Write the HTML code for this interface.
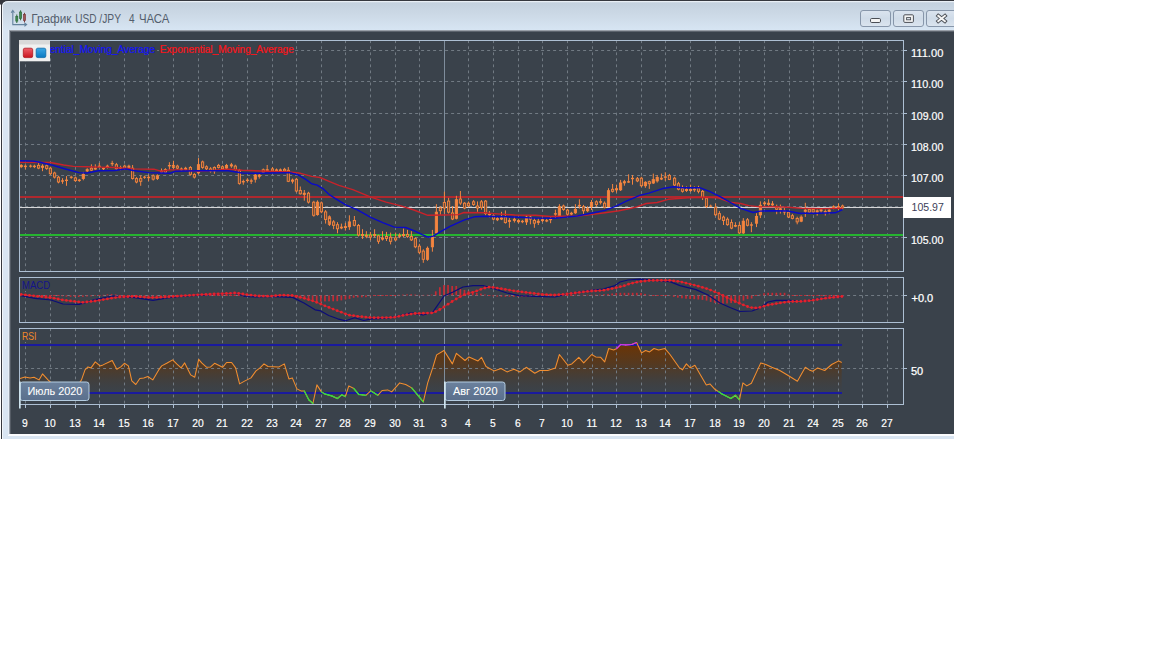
<!DOCTYPE html>
<html lang="ru"><head><meta charset="utf-8"><title>График USD /JPY 4 ЧАСА</title>
<style>html,body{margin:0;padding:0;background:#fff;width:1152px;height:648px;overflow:hidden}svg text{white-space:pre}</style>
</head><body>
<svg width="1152" height="648" viewBox="0 0 1152 648" style="display:block">
<defs>
<linearGradient id="tb" gradientUnits="userSpaceOnUse" x1="0" y1="2" x2="0" y2="30"><stop offset="0" stop-color="#c4d1de"/><stop offset="0.5" stop-color="#cddae7"/><stop offset="1" stop-color="#d7e5f3"/></linearGradient>
<linearGradient id="btn" x1="0" y1="0" x2="0" y2="1"><stop offset="0" stop-color="#dbe4ef"/><stop offset="0.5" stop-color="#cfdbe8"/><stop offset="1" stop-color="#dce5ef"/></linearGradient>
<linearGradient id="rsif" gradientUnits="userSpaceOnUse" x1="0" y1="343" x2="0" y2="393"><stop offset="0" stop-color="#6e3403" stop-opacity="1"/><stop offset="0.4" stop-color="#643408" stop-opacity="0.66"/><stop offset="0.75" stop-color="#5a3510" stop-opacity="0.22"/><stop offset="1" stop-color="#5a3a1a" stop-opacity="0"/></linearGradient>
<linearGradient id="lbl" x1="0" y1="0" x2="0" y2="1"><stop offset="0" stop-color="#6b819d"/><stop offset="1" stop-color="#5a6f8c"/></linearGradient>
<linearGradient id="rsq" x1="0" y1="0" x2="0" y2="1"><stop offset="0" stop-color="#f0606a"/><stop offset="1" stop-color="#c8141e"/></linearGradient>
<linearGradient id="bsq" x1="0" y1="0" x2="0" y2="1"><stop offset="0" stop-color="#3aa8e6"/><stop offset="1" stop-color="#0a78c0"/></linearGradient>
<clipPath id="cw"><rect x="0" y="0" width="954" height="439"/></clipPath>
<clipPath id="cmain"><rect x="20" y="41" width="883" height="230"/></clipPath>
<clipPath id="cmacd"><rect x="20" y="278" width="883" height="44"/></clipPath>
<clipPath id="crsi"><rect x="20" y="329" width="883" height="75"/></clipPath>
</defs>
<rect width="1152" height="648" fill="#ffffff"/>
<g clip-path="url(#cw)">
<path d="M0 0 H8 V1.5 L2 6 L0 4 Z" fill="#36383e"/>
<path d="M2 439 V6 Q2 1 8 1 H954 V439 Z" fill="url(#tb)"/>
<rect x="2" y="30" width="952" height="409" fill="#d9e5f2"/>
<path d="M1.5 439 V6 Q1.5 0.5 8 0.5 H954" fill="none" stroke="#36383e" stroke-width="1"/>
<path d="M2.5 439 V7 Q2.5 1.7 8 1.7 H954" fill="none" stroke="#f2f6fa" stroke-width="1"/>
<rect x="9" y="30" width="946" height="404" fill="#3a424b"/>
<rect x="9" y="30" width="946" height="1" fill="#9aa0a8"/><rect x="9" y="31" width="946" height="1" fill="#5d646d"/>
<rect x="9" y="30" width="1" height="404" fill="#98a0aa"/><rect x="10" y="31" width="1" height="403" fill="#555c65"/>
<rect x="8" y="434" width="947" height="2" fill="#fbfcfe"/>
<rect x="8" y="30" width="1" height="405" fill="#e6eef7"/>
<g fill="none" stroke="#64839e" stroke-width="1.1"><path d="M12.8 11 V24.6 H26"/><path d="M11.2 12.8 L12.8 10.4 L14.4 12.8"/><path d="M24.4 23 L26.6 24.6 L24.4 26.2"/></g>
<g stroke-width="1"><path d="M16.8 14.5 V23" stroke="#2f6b3c"/><rect x="15.8" y="16.5" width="2" height="4.6" fill="#3f8a50" stroke="#2f6b3c" stroke-width="0.7"/><path d="M20.6 10.3 V20.3" stroke="#2f6b3c"/><rect x="19.6" y="12" width="2" height="6.4" fill="#3f8a50" stroke="#2f6b3c" stroke-width="0.7"/><path d="M24.5 12.8 V22.4" stroke="#7a3c3c"/><rect x="23.5" y="14.6" width="2" height="6" fill="#a05555" stroke="#7a3c3c" stroke-width="0.7"/></g>
<text y="23.2" font-family="'Liberation Sans', sans-serif" font-size="12.6" fill="#545e6d" xml:space="preserve"><tspan x="31.3" textLength="40.2" lengthAdjust="spacingAndGlyphs">График</tspan> <tspan x="75.3" textLength="21.2" lengthAdjust="spacingAndGlyphs">USD</tspan> <tspan x="99.3" textLength="21.5" lengthAdjust="spacingAndGlyphs">/JPY</tspan>  <tspan x="128.9" textLength="5.6" lengthAdjust="spacingAndGlyphs">4</tspan> <tspan x="138.9" textLength="30.6" lengthAdjust="spacingAndGlyphs">ЧАСА</tspan></text>
<rect x="860.5" y="10.5" width="30" height="16" rx="2.5" fill="url(#btn)" stroke="#8796aa" stroke-width="1"/>
<rect x="893.5" y="10.5" width="30" height="16" rx="2.5" fill="url(#btn)" stroke="#8796aa" stroke-width="1"/>
<rect x="926.5" y="10.5" width="32" height="16" rx="2.5" fill="url(#btn)" stroke="#8796aa" stroke-width="1"/>
<rect x="870.5" y="18.5" width="10" height="4" rx="1.2" fill="#f4f4f4" stroke="#4a4e55" stroke-width="1"/>
<rect x="903.8" y="14.8" width="9.6" height="7.6" rx="1" fill="#f4f4f4" stroke="#4a4e55" stroke-width="1"/><rect x="906.6" y="17.6" width="4" height="2.2" fill="#dfe6ee" stroke="#4a4e55" stroke-width="0.9"/>
<path d="M938.3 15.8 L944.9 21.2 M944.9 15.8 L938.3 21.2" stroke="#4a4e55" stroke-width="3.8" stroke-linecap="square"/><path d="M938.3 15.8 L944.9 21.2 M944.9 15.8 L938.3 21.2" stroke="#f4f4f4" stroke-width="2" stroke-linecap="square"/>
<line x1="25.50" y1="40.3" x2="25.50" y2="271" stroke="#717a83" stroke-width="1" stroke-dasharray="2.8 3.23"/>
<line x1="50.50" y1="40.3" x2="50.50" y2="271" stroke="#717a83" stroke-width="1" stroke-dasharray="2.8 3.23"/>
<line x1="75.50" y1="40.3" x2="75.50" y2="271" stroke="#717a83" stroke-width="1" stroke-dasharray="2.8 3.23"/>
<line x1="99.50" y1="40.3" x2="99.50" y2="271" stroke="#717a83" stroke-width="1" stroke-dasharray="2.8 3.23"/>
<line x1="124.50" y1="40.3" x2="124.50" y2="271" stroke="#717a83" stroke-width="1" stroke-dasharray="2.8 3.23"/>
<line x1="148.50" y1="40.3" x2="148.50" y2="271" stroke="#717a83" stroke-width="1" stroke-dasharray="2.8 3.23"/>
<line x1="173.50" y1="40.3" x2="173.50" y2="271" stroke="#717a83" stroke-width="1" stroke-dasharray="2.8 3.23"/>
<line x1="198.50" y1="40.3" x2="198.50" y2="271" stroke="#717a83" stroke-width="1" stroke-dasharray="2.8 3.23"/>
<line x1="222.50" y1="40.3" x2="222.50" y2="271" stroke="#717a83" stroke-width="1" stroke-dasharray="2.8 3.23"/>
<line x1="247.50" y1="40.3" x2="247.50" y2="271" stroke="#717a83" stroke-width="1" stroke-dasharray="2.8 3.23"/>
<line x1="272.50" y1="40.3" x2="272.50" y2="271" stroke="#717a83" stroke-width="1" stroke-dasharray="2.8 3.23"/>
<line x1="296.50" y1="40.3" x2="296.50" y2="271" stroke="#717a83" stroke-width="1" stroke-dasharray="2.8 3.23"/>
<line x1="321.50" y1="40.3" x2="321.50" y2="271" stroke="#717a83" stroke-width="1" stroke-dasharray="2.8 3.23"/>
<line x1="345.50" y1="40.3" x2="345.50" y2="271" stroke="#717a83" stroke-width="1" stroke-dasharray="2.8 3.23"/>
<line x1="370.50" y1="40.3" x2="370.50" y2="271" stroke="#717a83" stroke-width="1" stroke-dasharray="2.8 3.23"/>
<line x1="395.50" y1="40.3" x2="395.50" y2="271" stroke="#717a83" stroke-width="1" stroke-dasharray="2.8 3.23"/>
<line x1="419.50" y1="40.3" x2="419.50" y2="271" stroke="#717a83" stroke-width="1" stroke-dasharray="2.8 3.23"/>
<line x1="468.50" y1="40.3" x2="468.50" y2="271" stroke="#717a83" stroke-width="1" stroke-dasharray="2.8 3.23"/>
<line x1="493.50" y1="40.3" x2="493.50" y2="271" stroke="#717a83" stroke-width="1" stroke-dasharray="2.8 3.23"/>
<line x1="518.50" y1="40.3" x2="518.50" y2="271" stroke="#717a83" stroke-width="1" stroke-dasharray="2.8 3.23"/>
<line x1="542.50" y1="40.3" x2="542.50" y2="271" stroke="#717a83" stroke-width="1" stroke-dasharray="2.8 3.23"/>
<line x1="567.50" y1="40.3" x2="567.50" y2="271" stroke="#717a83" stroke-width="1" stroke-dasharray="2.8 3.23"/>
<line x1="592.50" y1="40.3" x2="592.50" y2="271" stroke="#717a83" stroke-width="1" stroke-dasharray="2.8 3.23"/>
<line x1="616.50" y1="40.3" x2="616.50" y2="271" stroke="#717a83" stroke-width="1" stroke-dasharray="2.8 3.23"/>
<line x1="641.50" y1="40.3" x2="641.50" y2="271" stroke="#717a83" stroke-width="1" stroke-dasharray="2.8 3.23"/>
<line x1="665.50" y1="40.3" x2="665.50" y2="271" stroke="#717a83" stroke-width="1" stroke-dasharray="2.8 3.23"/>
<line x1="690.50" y1="40.3" x2="690.50" y2="271" stroke="#717a83" stroke-width="1" stroke-dasharray="2.8 3.23"/>
<line x1="715.50" y1="40.3" x2="715.50" y2="271" stroke="#717a83" stroke-width="1" stroke-dasharray="2.8 3.23"/>
<line x1="739.50" y1="40.3" x2="739.50" y2="271" stroke="#717a83" stroke-width="1" stroke-dasharray="2.8 3.23"/>
<line x1="764.50" y1="40.3" x2="764.50" y2="271" stroke="#717a83" stroke-width="1" stroke-dasharray="2.8 3.23"/>
<line x1="789.50" y1="40.3" x2="789.50" y2="271" stroke="#717a83" stroke-width="1" stroke-dasharray="2.8 3.23"/>
<line x1="813.50" y1="40.3" x2="813.50" y2="271" stroke="#717a83" stroke-width="1" stroke-dasharray="2.8 3.23"/>
<line x1="838.50" y1="40.3" x2="838.50" y2="271" stroke="#717a83" stroke-width="1" stroke-dasharray="2.8 3.23"/>
<line x1="862.50" y1="40.3" x2="862.50" y2="271" stroke="#717a83" stroke-width="1" stroke-dasharray="2.8 3.23"/>
<line x1="887.50" y1="40.3" x2="887.50" y2="271" stroke="#717a83" stroke-width="1" stroke-dasharray="2.8 3.23"/>
<line x1="20" y1="50.50" x2="903" y2="50.50" stroke="#717a83" stroke-width="1" stroke-dasharray="3 3" stroke-dashoffset="0.9"/>
<line x1="903" y1="50.50" x2="907" y2="50.50" stroke="#adbfd3" stroke-width="1"/>
<line x1="20" y1="81.50" x2="903" y2="81.50" stroke="#717a83" stroke-width="1" stroke-dasharray="3 3" stroke-dashoffset="0.9"/>
<line x1="903" y1="81.50" x2="907" y2="81.50" stroke="#adbfd3" stroke-width="1"/>
<line x1="20" y1="113.50" x2="903" y2="113.50" stroke="#717a83" stroke-width="1" stroke-dasharray="3 3" stroke-dashoffset="0.9"/>
<line x1="903" y1="113.50" x2="907" y2="113.50" stroke="#adbfd3" stroke-width="1"/>
<line x1="20" y1="144.50" x2="903" y2="144.50" stroke="#717a83" stroke-width="1" stroke-dasharray="3 3" stroke-dashoffset="0.9"/>
<line x1="903" y1="144.50" x2="907" y2="144.50" stroke="#adbfd3" stroke-width="1"/>
<line x1="20" y1="175.50" x2="903" y2="175.50" stroke="#717a83" stroke-width="1" stroke-dasharray="3 3" stroke-dashoffset="0.9"/>
<line x1="903" y1="175.50" x2="907" y2="175.50" stroke="#adbfd3" stroke-width="1"/>
<line x1="20" y1="206.50" x2="903" y2="206.50" stroke="#717a83" stroke-width="1" stroke-dasharray="3 3" stroke-dashoffset="0.9"/>
<line x1="903" y1="206.50" x2="907" y2="206.50" stroke="#adbfd3" stroke-width="1"/>
<line x1="20" y1="237.50" x2="903" y2="237.50" stroke="#717a83" stroke-width="1" stroke-dasharray="3 3" stroke-dashoffset="0.9"/>
<line x1="903" y1="237.50" x2="907" y2="237.50" stroke="#adbfd3" stroke-width="1"/>
<line x1="25.50" y1="277.3" x2="25.50" y2="322" stroke="#717a83" stroke-width="1" stroke-dasharray="2.8 3.23"/>
<line x1="50.50" y1="277.3" x2="50.50" y2="322" stroke="#717a83" stroke-width="1" stroke-dasharray="2.8 3.23"/>
<line x1="75.50" y1="277.3" x2="75.50" y2="322" stroke="#717a83" stroke-width="1" stroke-dasharray="2.8 3.23"/>
<line x1="99.50" y1="277.3" x2="99.50" y2="322" stroke="#717a83" stroke-width="1" stroke-dasharray="2.8 3.23"/>
<line x1="124.50" y1="277.3" x2="124.50" y2="322" stroke="#717a83" stroke-width="1" stroke-dasharray="2.8 3.23"/>
<line x1="148.50" y1="277.3" x2="148.50" y2="322" stroke="#717a83" stroke-width="1" stroke-dasharray="2.8 3.23"/>
<line x1="173.50" y1="277.3" x2="173.50" y2="322" stroke="#717a83" stroke-width="1" stroke-dasharray="2.8 3.23"/>
<line x1="198.50" y1="277.3" x2="198.50" y2="322" stroke="#717a83" stroke-width="1" stroke-dasharray="2.8 3.23"/>
<line x1="222.50" y1="277.3" x2="222.50" y2="322" stroke="#717a83" stroke-width="1" stroke-dasharray="2.8 3.23"/>
<line x1="247.50" y1="277.3" x2="247.50" y2="322" stroke="#717a83" stroke-width="1" stroke-dasharray="2.8 3.23"/>
<line x1="272.50" y1="277.3" x2="272.50" y2="322" stroke="#717a83" stroke-width="1" stroke-dasharray="2.8 3.23"/>
<line x1="296.50" y1="277.3" x2="296.50" y2="322" stroke="#717a83" stroke-width="1" stroke-dasharray="2.8 3.23"/>
<line x1="321.50" y1="277.3" x2="321.50" y2="322" stroke="#717a83" stroke-width="1" stroke-dasharray="2.8 3.23"/>
<line x1="345.50" y1="277.3" x2="345.50" y2="322" stroke="#717a83" stroke-width="1" stroke-dasharray="2.8 3.23"/>
<line x1="370.50" y1="277.3" x2="370.50" y2="322" stroke="#717a83" stroke-width="1" stroke-dasharray="2.8 3.23"/>
<line x1="395.50" y1="277.3" x2="395.50" y2="322" stroke="#717a83" stroke-width="1" stroke-dasharray="2.8 3.23"/>
<line x1="419.50" y1="277.3" x2="419.50" y2="322" stroke="#717a83" stroke-width="1" stroke-dasharray="2.8 3.23"/>
<line x1="468.50" y1="277.3" x2="468.50" y2="322" stroke="#717a83" stroke-width="1" stroke-dasharray="2.8 3.23"/>
<line x1="493.50" y1="277.3" x2="493.50" y2="322" stroke="#717a83" stroke-width="1" stroke-dasharray="2.8 3.23"/>
<line x1="518.50" y1="277.3" x2="518.50" y2="322" stroke="#717a83" stroke-width="1" stroke-dasharray="2.8 3.23"/>
<line x1="542.50" y1="277.3" x2="542.50" y2="322" stroke="#717a83" stroke-width="1" stroke-dasharray="2.8 3.23"/>
<line x1="567.50" y1="277.3" x2="567.50" y2="322" stroke="#717a83" stroke-width="1" stroke-dasharray="2.8 3.23"/>
<line x1="592.50" y1="277.3" x2="592.50" y2="322" stroke="#717a83" stroke-width="1" stroke-dasharray="2.8 3.23"/>
<line x1="616.50" y1="277.3" x2="616.50" y2="322" stroke="#717a83" stroke-width="1" stroke-dasharray="2.8 3.23"/>
<line x1="641.50" y1="277.3" x2="641.50" y2="322" stroke="#717a83" stroke-width="1" stroke-dasharray="2.8 3.23"/>
<line x1="665.50" y1="277.3" x2="665.50" y2="322" stroke="#717a83" stroke-width="1" stroke-dasharray="2.8 3.23"/>
<line x1="690.50" y1="277.3" x2="690.50" y2="322" stroke="#717a83" stroke-width="1" stroke-dasharray="2.8 3.23"/>
<line x1="715.50" y1="277.3" x2="715.50" y2="322" stroke="#717a83" stroke-width="1" stroke-dasharray="2.8 3.23"/>
<line x1="739.50" y1="277.3" x2="739.50" y2="322" stroke="#717a83" stroke-width="1" stroke-dasharray="2.8 3.23"/>
<line x1="764.50" y1="277.3" x2="764.50" y2="322" stroke="#717a83" stroke-width="1" stroke-dasharray="2.8 3.23"/>
<line x1="789.50" y1="277.3" x2="789.50" y2="322" stroke="#717a83" stroke-width="1" stroke-dasharray="2.8 3.23"/>
<line x1="813.50" y1="277.3" x2="813.50" y2="322" stroke="#717a83" stroke-width="1" stroke-dasharray="2.8 3.23"/>
<line x1="838.50" y1="277.3" x2="838.50" y2="322" stroke="#717a83" stroke-width="1" stroke-dasharray="2.8 3.23"/>
<line x1="862.50" y1="277.3" x2="862.50" y2="322" stroke="#717a83" stroke-width="1" stroke-dasharray="2.8 3.23"/>
<line x1="887.50" y1="277.3" x2="887.50" y2="322" stroke="#717a83" stroke-width="1" stroke-dasharray="2.8 3.23"/>
<line x1="20" y1="295.50" x2="903" y2="295.50" stroke="#717a83" stroke-width="1" stroke-dasharray="3 3" stroke-dashoffset="0.9"/>
<line x1="903" y1="295.50" x2="907" y2="295.50" stroke="#adbfd3" stroke-width="1"/>
<path d="M20.0 378.5 L25.0 376.9 L30.0 377.9 L34.0 377.3 L39.0 379.9 L42.5 373.9 L48.0 379.9 L52.0 383.5 L70.0 384.5 L79.0 383.5 L81.5 379.9 L85.0 369.9 L88.0 366.9 L91.0 367.9 L95.3 361.9 L100.0 365.9 L103.0 364.9 L112.2 360.5 L116.8 369.3 L120.8 366.9 L124.4 363.3 L128.4 365.9 L131.8 380.9 L135.8 384.5 L139.8 378.5 L143.8 377.9 L147.8 376.5 L152.8 379.9 L158.7 369.9 L161.7 365.9 L166.7 363.3 L172.7 359.9 L176.7 363.9 L181.1 367.9 L184.7 362.9 L190.7 374.9 L194.7 377.3 L198.7 359.3 L201.7 362.9 L206.7 367.3 L210.6 366.9 L214.6 363.3 L222.6 367.3 L226.6 362.5 L231.6 362.5 L235.6 367.9 L239.6 383.9 L245.0 380.9 L251.0 377.9 L256.0 370.9 L260.0 367.9 L264.0 363.9 L268.0 366.5 L279.0 366.9 L284.3 363.9 L288.9 378.9 L292.3 377.9 L296.9 388.9 L300.9 390.9 L304.3 390.9 L308.9 399.9 L312.9 403.5 L316.9 384.9 L321.4 391.9 L324.8 393.9 L331.8 395.9 L337.4 398.5 L341.8 394.9 L345.4 396.5 L348.8 385.9 L353.8 388.5 L358.8 394.5 L365.8 395.3 L370.8 390.9 L377.8 395.3 L382.1 390.5 L387.7 389.9 L391.7 391.9 L399.7 382.9 L405.7 384.5 L411.7 387.9 L416.7 393.9 L423.3 401.9 L427.7 382.9 L432.7 367.9 L436.6 354.9 L444.0 350.5 L452.4 363.9 L456.4 353.3 L465.0 360.5 L469.0 356.9 L478.0 360.9 L481.5 357.3 L486.0 366.5 L494.0 370.9 L501.0 368.5 L507.0 371.9 L514.0 369.3 L520.0 371.9 L526.2 367.3 L534.8 373.3 L539.8 370.5 L547.8 370.5 L555.4 367.9 L559.4 354.5 L567.8 365.3 L571.8 363.9 L578.8 357.3 L583.7 362.9 L591.7 354.5 L595.7 356.9 L600.7 357.3 L604.7 361.9 L608.7 348.5 L613.7 349.9 L616.7 348.5 L620.7 344.5 L625.7 344.9 L631.7 344.5 L636.6 342.5 L641.6 352.9 L645.6 350.5 L649.6 351.9 L654.0 348.5 L658.6 349.9 L665.0 348.6 L670.0 354.5 L679.0 367.3 L682.4 369.9 L686.4 363.9 L690.3 367.9 L694.9 365.3 L699.9 373.9 L706.3 384.9 L709.9 383.9 L714.9 389.3 L721.9 393.9 L730.9 398.5 L735.5 395.3 L739.5 399.9 L742.9 382.9 L746.8 385.9 L751.4 383.3 L760.8 362.9 L765.8 364.5 L771.8 367.3 L779.8 370.5 L787.8 375.3 L797.4 381.3 L805.3 367.3 L809.3 369.9 L812.7 371.3 L817.7 367.9 L824.7 370.5 L831.7 364.5 L838.7 360.9 L841.7 362.5 L841.7 398 L20.0 398 Z" fill="url(#rsif)" clip-path="url(#crsi)"/>
<line x1="25.50" y1="328.3" x2="25.50" y2="404" stroke="#717a83" stroke-width="1" stroke-dasharray="2.8 3.23"/>
<line x1="50.50" y1="328.3" x2="50.50" y2="404" stroke="#717a83" stroke-width="1" stroke-dasharray="2.8 3.23"/>
<line x1="75.50" y1="328.3" x2="75.50" y2="404" stroke="#717a83" stroke-width="1" stroke-dasharray="2.8 3.23"/>
<line x1="99.50" y1="328.3" x2="99.50" y2="404" stroke="#717a83" stroke-width="1" stroke-dasharray="2.8 3.23"/>
<line x1="124.50" y1="328.3" x2="124.50" y2="404" stroke="#717a83" stroke-width="1" stroke-dasharray="2.8 3.23"/>
<line x1="148.50" y1="328.3" x2="148.50" y2="404" stroke="#717a83" stroke-width="1" stroke-dasharray="2.8 3.23"/>
<line x1="173.50" y1="328.3" x2="173.50" y2="404" stroke="#717a83" stroke-width="1" stroke-dasharray="2.8 3.23"/>
<line x1="198.50" y1="328.3" x2="198.50" y2="404" stroke="#717a83" stroke-width="1" stroke-dasharray="2.8 3.23"/>
<line x1="222.50" y1="328.3" x2="222.50" y2="404" stroke="#717a83" stroke-width="1" stroke-dasharray="2.8 3.23"/>
<line x1="247.50" y1="328.3" x2="247.50" y2="404" stroke="#717a83" stroke-width="1" stroke-dasharray="2.8 3.23"/>
<line x1="272.50" y1="328.3" x2="272.50" y2="404" stroke="#717a83" stroke-width="1" stroke-dasharray="2.8 3.23"/>
<line x1="296.50" y1="328.3" x2="296.50" y2="404" stroke="#717a83" stroke-width="1" stroke-dasharray="2.8 3.23"/>
<line x1="321.50" y1="328.3" x2="321.50" y2="404" stroke="#717a83" stroke-width="1" stroke-dasharray="2.8 3.23"/>
<line x1="345.50" y1="328.3" x2="345.50" y2="404" stroke="#717a83" stroke-width="1" stroke-dasharray="2.8 3.23"/>
<line x1="370.50" y1="328.3" x2="370.50" y2="404" stroke="#717a83" stroke-width="1" stroke-dasharray="2.8 3.23"/>
<line x1="395.50" y1="328.3" x2="395.50" y2="404" stroke="#717a83" stroke-width="1" stroke-dasharray="2.8 3.23"/>
<line x1="419.50" y1="328.3" x2="419.50" y2="404" stroke="#717a83" stroke-width="1" stroke-dasharray="2.8 3.23"/>
<line x1="468.50" y1="328.3" x2="468.50" y2="404" stroke="#717a83" stroke-width="1" stroke-dasharray="2.8 3.23"/>
<line x1="493.50" y1="328.3" x2="493.50" y2="404" stroke="#717a83" stroke-width="1" stroke-dasharray="2.8 3.23"/>
<line x1="518.50" y1="328.3" x2="518.50" y2="404" stroke="#717a83" stroke-width="1" stroke-dasharray="2.8 3.23"/>
<line x1="542.50" y1="328.3" x2="542.50" y2="404" stroke="#717a83" stroke-width="1" stroke-dasharray="2.8 3.23"/>
<line x1="567.50" y1="328.3" x2="567.50" y2="404" stroke="#717a83" stroke-width="1" stroke-dasharray="2.8 3.23"/>
<line x1="592.50" y1="328.3" x2="592.50" y2="404" stroke="#717a83" stroke-width="1" stroke-dasharray="2.8 3.23"/>
<line x1="616.50" y1="328.3" x2="616.50" y2="404" stroke="#717a83" stroke-width="1" stroke-dasharray="2.8 3.23"/>
<line x1="641.50" y1="328.3" x2="641.50" y2="404" stroke="#717a83" stroke-width="1" stroke-dasharray="2.8 3.23"/>
<line x1="665.50" y1="328.3" x2="665.50" y2="404" stroke="#717a83" stroke-width="1" stroke-dasharray="2.8 3.23"/>
<line x1="690.50" y1="328.3" x2="690.50" y2="404" stroke="#717a83" stroke-width="1" stroke-dasharray="2.8 3.23"/>
<line x1="715.50" y1="328.3" x2="715.50" y2="404" stroke="#717a83" stroke-width="1" stroke-dasharray="2.8 3.23"/>
<line x1="739.50" y1="328.3" x2="739.50" y2="404" stroke="#717a83" stroke-width="1" stroke-dasharray="2.8 3.23"/>
<line x1="764.50" y1="328.3" x2="764.50" y2="404" stroke="#717a83" stroke-width="1" stroke-dasharray="2.8 3.23"/>
<line x1="789.50" y1="328.3" x2="789.50" y2="404" stroke="#717a83" stroke-width="1" stroke-dasharray="2.8 3.23"/>
<line x1="813.50" y1="328.3" x2="813.50" y2="404" stroke="#717a83" stroke-width="1" stroke-dasharray="2.8 3.23"/>
<line x1="838.50" y1="328.3" x2="838.50" y2="404" stroke="#717a83" stroke-width="1" stroke-dasharray="2.8 3.23"/>
<line x1="862.50" y1="328.3" x2="862.50" y2="404" stroke="#717a83" stroke-width="1" stroke-dasharray="2.8 3.23"/>
<line x1="887.50" y1="328.3" x2="887.50" y2="404" stroke="#717a83" stroke-width="1" stroke-dasharray="2.8 3.23"/>
<line x1="20" y1="368.50" x2="903" y2="368.50" stroke="#717a83" stroke-width="1" stroke-dasharray="3 3" stroke-dashoffset="0.9"/>
<line x1="903" y1="368.50" x2="907" y2="368.50" stroke="#adbfd3" stroke-width="1"/>
<line x1="444.5" y1="41" x2="444.5" y2="271" stroke="#7f8d9c" stroke-width="1"/>
<line x1="444.5" y1="278" x2="444.5" y2="322" stroke="#7f8d9c" stroke-width="1"/>
<line x1="444.5" y1="329" x2="444.5" y2="404" stroke="#7f8d9c" stroke-width="1"/>
<g clip-path="url(#cmain)">
<rect x="20" y="196.1" width="883" height="1.8" fill="#bd262c"/>
<rect x="20" y="234" width="883" height="2" fill="#26b430"/>
<rect x="20" y="207" width="883" height="1" fill="#d6d6d8"/>
<line x1="21.2" y1="164.0" x2="21.2" y2="168.1" stroke="#f4853f" stroke-width="1"/>
<rect x="19.8" y="165.0" width="3" height="2.1" fill="#f4853f"/>
<line x1="25.4" y1="164.3" x2="25.4" y2="169.4" stroke="#f4853f" stroke-width="1"/>
<rect x="23.9" y="165.7" width="3" height="1.4" fill="#f4853f"/>
<line x1="30.6" y1="164.6" x2="30.6" y2="167.6" stroke="#f4853f" stroke-width="1"/>
<rect x="29.1" y="165.6" width="3" height="1.1" fill="#f4853f"/>
<line x1="34.4" y1="164.7" x2="34.4" y2="168.1" stroke="#f4853f" stroke-width="1"/>
<rect x="32.9" y="165.7" width="3" height="1.4" fill="#f4853f"/>
<line x1="38.6" y1="162.9" x2="38.6" y2="169.2" stroke="#f4853f" stroke-width="1"/>
<rect x="37.5" y="165.4" width="2.2" height="2.7" fill="#6a4a38" stroke="#f4853f" stroke-width="0.9"/>
<line x1="42.5" y1="164.3" x2="42.5" y2="171.2" stroke="#f4853f" stroke-width="1"/>
<rect x="41.0" y="165.7" width="3" height="2.1" fill="#f4853f"/>
<line x1="46.7" y1="164.3" x2="46.7" y2="169.9" stroke="#f4853f" stroke-width="1"/>
<rect x="45.6" y="165.7" width="2.2" height="2.8" fill="#6a4a38" stroke="#f4853f" stroke-width="0.9"/>
<line x1="50.4" y1="166.8" x2="50.4" y2="175.0" stroke="#f4853f" stroke-width="1"/>
<rect x="49.3" y="168.2" width="2.2" height="5.5" fill="#6a4a38" stroke="#f4853f" stroke-width="0.9"/>
<line x1="54.6" y1="171.7" x2="54.6" y2="178.5" stroke="#f4853f" stroke-width="1"/>
<rect x="53.5" y="173.0" width="2.2" height="4.1" fill="#6a4a38" stroke="#f4853f" stroke-width="0.9"/>
<line x1="58.5" y1="175.8" x2="58.5" y2="183.3" stroke="#f4853f" stroke-width="1"/>
<rect x="57.4" y="177.2" width="2.2" height="4.8" fill="#6a4a38" stroke="#f4853f" stroke-width="0.9"/>
<line x1="62.5" y1="178.2" x2="62.5" y2="183.8" stroke="#f4853f" stroke-width="1"/>
<rect x="61.0" y="180.3" width="3" height="1.4" fill="#f4853f"/>
<line x1="66.5" y1="176.1" x2="66.5" y2="185.8" stroke="#f4853f" stroke-width="1"/>
<rect x="65.0" y="179.6" width="3" height="1.4" fill="#f4853f"/>
<line x1="71.2" y1="175.7" x2="71.2" y2="178.8" stroke="#f4853f" stroke-width="1"/>
<rect x="69.8" y="176.7" width="3" height="1.1" fill="#f4853f"/>
<line x1="75.4" y1="176.5" x2="75.4" y2="181.9" stroke="#f4853f" stroke-width="1"/>
<rect x="74.3" y="177.9" width="2.2" height="2.7" fill="#6a4a38" stroke="#f4853f" stroke-width="0.9"/>
<line x1="79.3" y1="178.9" x2="79.3" y2="181.9" stroke="#f4853f" stroke-width="1"/>
<rect x="77.8" y="179.6" width="3" height="1.4" fill="#f4853f"/>
<line x1="83.3" y1="171.9" x2="83.3" y2="180.3" stroke="#f4853f" stroke-width="1"/>
<rect x="82.2" y="174.4" width="2.2" height="4.1" fill="#f4853f" stroke="#f4853f" stroke-width="0.9"/>
<line x1="87.2" y1="168.2" x2="87.2" y2="172.2" stroke="#f4853f" stroke-width="1"/>
<rect x="85.7" y="169.2" width="3" height="2.1" fill="#f4853f"/>
<line x1="91.4" y1="164.3" x2="91.4" y2="171.2" stroke="#f4853f" stroke-width="1"/>
<rect x="90.3" y="168.2" width="2.2" height="2.0" fill="#6a4a38" stroke="#f4853f" stroke-width="0.9"/>
<line x1="95.3" y1="164.3" x2="95.3" y2="169.9" stroke="#f4853f" stroke-width="1"/>
<rect x="93.8" y="167.8" width="3" height="1.7" fill="#f4853f"/>
<line x1="99.3" y1="162.9" x2="99.3" y2="168.1" stroke="#f4853f" stroke-width="1"/>
<rect x="97.8" y="165.7" width="3" height="1.4" fill="#f4853f"/>
<line x1="103.5" y1="167.1" x2="103.5" y2="170.8" stroke="#f4853f" stroke-width="1"/>
<rect x="102.0" y="167.8" width="3" height="1.4" fill="#f4853f"/>
<line x1="107.4" y1="164.7" x2="107.4" y2="168.5" stroke="#f4853f" stroke-width="1"/>
<rect x="105.9" y="165.7" width="3" height="1.4" fill="#f4853f"/>
<line x1="112.2" y1="160.8" x2="112.2" y2="166.0" stroke="#f4853f" stroke-width="1"/>
<rect x="110.7" y="162.9" width="3" height="1.4" fill="#f4853f"/>
<line x1="116.4" y1="162.9" x2="116.4" y2="169.9" stroke="#f4853f" stroke-width="1"/>
<rect x="115.3" y="164.7" width="2.2" height="4.1" fill="#6a4a38" stroke="#f4853f" stroke-width="0.9"/>
<line x1="120.6" y1="165.7" x2="120.6" y2="170.3" stroke="#f4853f" stroke-width="1"/>
<rect x="119.1" y="167.1" width="3" height="1.4" fill="#f4853f"/>
<line x1="124.7" y1="164.7" x2="124.7" y2="169.4" stroke="#f4853f" stroke-width="1"/>
<rect x="123.6" y="166.1" width="2.2" height="2.0" fill="#6a4a38" stroke="#f4853f" stroke-width="0.9"/>
<line x1="128.9" y1="164.7" x2="128.9" y2="168.8" stroke="#f4853f" stroke-width="1"/>
<rect x="127.4" y="165.7" width="3" height="2.1" fill="#f4853f"/>
<line x1="132.6" y1="165.0" x2="132.6" y2="179.6" stroke="#f4853f" stroke-width="1"/>
<rect x="131.5" y="168.2" width="2.2" height="10.3" fill="#6a4a38" stroke="#f4853f" stroke-width="0.9"/>
<line x1="136.5" y1="177.2" x2="136.5" y2="183.3" stroke="#f4853f" stroke-width="1"/>
<rect x="135.4" y="178.6" width="2.2" height="3.4" fill="#6a4a38" stroke="#f4853f" stroke-width="0.9"/>
<line x1="140.7" y1="175.4" x2="140.7" y2="185.8" stroke="#f4853f" stroke-width="1"/>
<rect x="139.6" y="178.6" width="2.2" height="2.7" fill="#6a4a38" stroke="#f4853f" stroke-width="0.9"/>
<line x1="144.6" y1="175.7" x2="144.6" y2="178.8" stroke="#f4853f" stroke-width="1"/>
<rect x="143.1" y="176.7" width="3" height="1.1" fill="#f4853f"/>
<line x1="148.6" y1="174.7" x2="148.6" y2="181.2" stroke="#f4853f" stroke-width="1"/>
<rect x="147.1" y="176.8" width="3" height="1.4" fill="#f4853f"/>
<line x1="153.2" y1="174.4" x2="153.2" y2="180.6" stroke="#f4853f" stroke-width="1"/>
<rect x="152.1" y="175.8" width="2.2" height="3.4" fill="#6a4a38" stroke="#f4853f" stroke-width="0.9"/>
<line x1="157.4" y1="174.4" x2="157.4" y2="180.0" stroke="#f4853f" stroke-width="1"/>
<rect x="156.3" y="175.8" width="2.2" height="2.7" fill="#f4853f" stroke="#f4853f" stroke-width="0.9"/>
<line x1="161.5" y1="168.5" x2="161.5" y2="173.3" stroke="#f4853f" stroke-width="1"/>
<rect x="160.0" y="170.6" width="3" height="2.1" fill="#f4853f"/>
<line x1="165.4" y1="168.2" x2="165.4" y2="173.6" stroke="#f4853f" stroke-width="1"/>
<rect x="164.3" y="169.6" width="2.2" height="2.7" fill="#6a4a38" stroke="#f4853f" stroke-width="0.9"/>
<line x1="169.4" y1="162.2" x2="169.4" y2="169.9" stroke="#f4853f" stroke-width="1"/>
<rect x="167.9" y="165.0" width="3" height="1.4" fill="#f4853f"/>
<line x1="173.3" y1="162.9" x2="173.3" y2="168.1" stroke="#f4853f" stroke-width="1"/>
<rect x="171.8" y="165.0" width="3" height="1.4" fill="#f4853f"/>
<line x1="173.5" y1="160.8" x2="173.5" y2="168.8" stroke="#f4853f" stroke-width="1"/>
<rect x="172.0" y="166.4" width="3" height="1.4" fill="#f4853f"/>
<line x1="177.4" y1="164.7" x2="177.4" y2="169.4" stroke="#f4853f" stroke-width="1"/>
<rect x="176.3" y="166.1" width="2.2" height="2.0" fill="#6a4a38" stroke="#f4853f" stroke-width="0.9"/>
<line x1="181.4" y1="167.5" x2="181.4" y2="171.2" stroke="#f4853f" stroke-width="1"/>
<rect x="179.9" y="168.5" width="3" height="1.8" fill="#f4853f"/>
<line x1="185.6" y1="166.8" x2="185.6" y2="170.8" stroke="#f4853f" stroke-width="1"/>
<rect x="184.1" y="167.8" width="3" height="2.1" fill="#f4853f"/>
<line x1="190.4" y1="166.1" x2="190.4" y2="175.7" stroke="#f4853f" stroke-width="1"/>
<rect x="189.3" y="167.5" width="2.2" height="6.8" fill="#6a4a38" stroke="#f4853f" stroke-width="0.9"/>
<line x1="194.4" y1="173.1" x2="194.4" y2="178.5" stroke="#f4853f" stroke-width="1"/>
<rect x="193.3" y="174.4" width="2.2" height="2.7" fill="#6a4a38" stroke="#f4853f" stroke-width="0.9"/>
<line x1="198.5" y1="158.1" x2="198.5" y2="174.3" stroke="#f4853f" stroke-width="1"/>
<rect x="197.4" y="164.7" width="2.2" height="8.2" fill="#f4853f" stroke="#f4853f" stroke-width="0.9"/>
<line x1="202.6" y1="160.6" x2="202.6" y2="168.8" stroke="#f4853f" stroke-width="1"/>
<rect x="201.5" y="161.9" width="2.2" height="5.5" fill="#6a4a38" stroke="#f4853f" stroke-width="0.9"/>
<line x1="206.5" y1="165.4" x2="206.5" y2="170.1" stroke="#f4853f" stroke-width="1"/>
<rect x="205.4" y="166.8" width="2.2" height="2.0" fill="#6a4a38" stroke="#f4853f" stroke-width="0.9"/>
<line x1="210.6" y1="167.1" x2="210.6" y2="172.6" stroke="#f4853f" stroke-width="1"/>
<rect x="209.5" y="168.9" width="2.2" height="2.0" fill="#6a4a38" stroke="#f4853f" stroke-width="0.9"/>
<line x1="214.4" y1="166.4" x2="214.4" y2="173.8" stroke="#f4853f" stroke-width="1"/>
<rect x="213.3" y="167.5" width="2.2" height="3.4" fill="#6a4a38" stroke="#f4853f" stroke-width="0.9"/>
<line x1="218.6" y1="163.9" x2="218.6" y2="168.5" stroke="#f4853f" stroke-width="1"/>
<rect x="217.5" y="165.4" width="2.2" height="2.0" fill="#6a4a38" stroke="#f4853f" stroke-width="0.9"/>
<line x1="222.5" y1="165.4" x2="222.5" y2="170.1" stroke="#f4853f" stroke-width="1"/>
<rect x="221.4" y="166.8" width="2.2" height="2.0" fill="#6a4a38" stroke="#f4853f" stroke-width="0.9"/>
<line x1="226.5" y1="163.9" x2="226.5" y2="169.2" stroke="#f4853f" stroke-width="1"/>
<rect x="225.4" y="165.4" width="2.2" height="2.7" fill="#f4853f" stroke="#f4853f" stroke-width="0.9"/>
<line x1="231.4" y1="162.9" x2="231.4" y2="167.8" stroke="#f4853f" stroke-width="1"/>
<rect x="229.9" y="164.3" width="3" height="2.1" fill="#f4853f"/>
<line x1="235.3" y1="164.7" x2="235.3" y2="170.8" stroke="#f4853f" stroke-width="1"/>
<rect x="234.2" y="166.1" width="2.2" height="3.4" fill="#6a4a38" stroke="#f4853f" stroke-width="0.9"/>
<line x1="239.4" y1="168.9" x2="239.4" y2="184.7" stroke="#f4853f" stroke-width="1"/>
<rect x="238.3" y="170.3" width="2.2" height="13.1" fill="#6a4a38" stroke="#f4853f" stroke-width="0.9"/>
<line x1="243.3" y1="179.6" x2="243.3" y2="184.7" stroke="#f4853f" stroke-width="1"/>
<rect x="241.8" y="181.0" width="3" height="1.4" fill="#f4853f"/>
<line x1="247.4" y1="178.2" x2="247.4" y2="182.6" stroke="#f4853f" stroke-width="1"/>
<rect x="245.9" y="179.6" width="3" height="1.4" fill="#f4853f"/>
<line x1="251.2" y1="178.6" x2="251.2" y2="184.0" stroke="#f4853f" stroke-width="1"/>
<rect x="249.8" y="180.3" width="3" height="1.4" fill="#f4853f"/>
<line x1="255.3" y1="174.0" x2="255.3" y2="182.6" stroke="#f4853f" stroke-width="1"/>
<rect x="254.2" y="175.1" width="2.2" height="4.1" fill="#f4853f" stroke="#f4853f" stroke-width="0.9"/>
<line x1="259.3" y1="173.3" x2="259.3" y2="178.6" stroke="#f4853f" stroke-width="1"/>
<rect x="257.8" y="174.7" width="3" height="2.1" fill="#f4853f"/>
<line x1="263.3" y1="168.5" x2="263.3" y2="173.3" stroke="#f4853f" stroke-width="1"/>
<rect x="262.2" y="169.8" width="2.2" height="2.4" fill="#6a4a38" stroke="#f4853f" stroke-width="0.9"/>
<line x1="267.2" y1="165.0" x2="267.2" y2="171.7" stroke="#f4853f" stroke-width="1"/>
<rect x="265.7" y="169.2" width="3" height="2.1" fill="#f4853f"/>
<line x1="272.5" y1="167.1" x2="272.5" y2="171.7" stroke="#f4853f" stroke-width="1"/>
<rect x="271.4" y="168.9" width="2.2" height="2.0" fill="#6a4a38" stroke="#f4853f" stroke-width="0.9"/>
<line x1="276.5" y1="168.5" x2="276.5" y2="172.2" stroke="#f4853f" stroke-width="1"/>
<rect x="275.0" y="169.4" width="3" height="1.8" fill="#f4853f"/>
<line x1="280.4" y1="168.5" x2="280.4" y2="172.2" stroke="#f4853f" stroke-width="1"/>
<rect x="278.9" y="169.4" width="3" height="1.8" fill="#f4853f"/>
<line x1="284.6" y1="167.8" x2="284.6" y2="171.7" stroke="#f4853f" stroke-width="1"/>
<rect x="283.5" y="169.3" width="2.2" height="1.6" fill="#6a4a38" stroke="#f4853f" stroke-width="0.9"/>
<line x1="288.3" y1="167.1" x2="288.3" y2="182.1" stroke="#f4853f" stroke-width="1"/>
<rect x="287.2" y="170.3" width="2.2" height="11.0" fill="#6a4a38" stroke="#f4853f" stroke-width="0.9"/>
<line x1="292.5" y1="178.6" x2="292.5" y2="183.5" stroke="#f4853f" stroke-width="1"/>
<rect x="291.0" y="179.6" width="3" height="2.1" fill="#f4853f"/>
<line x1="296.4" y1="177.9" x2="296.4" y2="192.4" stroke="#f4853f" stroke-width="1"/>
<rect x="295.3" y="179.3" width="2.2" height="11.7" fill="#6a4a38" stroke="#f4853f" stroke-width="0.9"/>
<line x1="300.3" y1="186.5" x2="300.3" y2="194.6" stroke="#f4853f" stroke-width="1"/>
<rect x="299.2" y="190.4" width="2.2" height="3.4" fill="#6a4a38" stroke="#f4853f" stroke-width="0.9"/>
<line x1="304.3" y1="190.0" x2="304.3" y2="200.7" stroke="#f4853f" stroke-width="1"/>
<rect x="302.8" y="192.8" width="3" height="2.1" fill="#f4853f"/>
<line x1="308.5" y1="191.8" x2="308.5" y2="203.5" stroke="#f4853f" stroke-width="1"/>
<rect x="307.4" y="193.2" width="2.2" height="8.9" fill="#6a4a38" stroke="#f4853f" stroke-width="0.9"/>
<line x1="313.8" y1="200.8" x2="313.8" y2="216.7" stroke="#f4853f" stroke-width="1"/>
<rect x="312.6" y="202.2" width="2.2" height="13.1" fill="#6a4a38" stroke="#f4853f" stroke-width="0.9"/>
<line x1="317.5" y1="200.4" x2="317.5" y2="215.7" stroke="#f4853f" stroke-width="1"/>
<rect x="316.4" y="202.2" width="2.2" height="12.4" fill="#f4853f" stroke="#f4853f" stroke-width="0.9"/>
<line x1="321.4" y1="201.5" x2="321.4" y2="213.2" stroke="#f4853f" stroke-width="1"/>
<rect x="320.3" y="202.9" width="2.2" height="8.9" fill="#6a4a38" stroke="#f4853f" stroke-width="0.9"/>
<line x1="325.6" y1="210.1" x2="325.6" y2="223.6" stroke="#f4853f" stroke-width="1"/>
<rect x="324.5" y="211.9" width="2.2" height="7.5" fill="#6a4a38" stroke="#f4853f" stroke-width="0.9"/>
<line x1="329.4" y1="215.4" x2="329.4" y2="225.7" stroke="#f4853f" stroke-width="1"/>
<rect x="328.3" y="216.8" width="2.2" height="7.5" fill="#6a4a38" stroke="#f4853f" stroke-width="0.9"/>
<line x1="329.6" y1="216.7" x2="329.6" y2="225.7" stroke="#f4853f" stroke-width="1"/>
<rect x="328.5" y="218.5" width="2.2" height="3.4" fill="#6a4a38" stroke="#f4853f" stroke-width="0.9"/>
<line x1="333.6" y1="220.1" x2="333.6" y2="229.2" stroke="#f4853f" stroke-width="1"/>
<rect x="332.5" y="221.9" width="2.2" height="3.4" fill="#6a4a38" stroke="#f4853f" stroke-width="0.9"/>
<line x1="337.5" y1="222.2" x2="337.5" y2="233.3" stroke="#f4853f" stroke-width="1"/>
<rect x="336.4" y="224.7" width="2.2" height="4.1" fill="#6a4a38" stroke="#f4853f" stroke-width="0.9"/>
<line x1="341.4" y1="223.6" x2="341.4" y2="229.2" stroke="#f4853f" stroke-width="1"/>
<rect x="339.9" y="226.7" width="3" height="1.7" fill="#f4853f"/>
<line x1="345.4" y1="222.9" x2="345.4" y2="230.6" stroke="#f4853f" stroke-width="1"/>
<rect x="343.9" y="226.1" width="3" height="1.9" fill="#f4853f"/>
<line x1="349.4" y1="215.3" x2="349.4" y2="229.9" stroke="#f4853f" stroke-width="1"/>
<rect x="348.3" y="221.9" width="2.2" height="4.8" fill="#f4853f" stroke="#f4853f" stroke-width="0.9"/>
<line x1="354.4" y1="216.0" x2="354.4" y2="226.4" stroke="#f4853f" stroke-width="1"/>
<rect x="353.3" y="220.5" width="2.2" height="4.8" fill="#6a4a38" stroke="#f4853f" stroke-width="0.9"/>
<line x1="358.5" y1="224.0" x2="358.5" y2="236.4" stroke="#f4853f" stroke-width="1"/>
<rect x="357.4" y="225.4" width="2.2" height="9.6" fill="#6a4a38" stroke="#f4853f" stroke-width="0.9"/>
<line x1="362.5" y1="229.2" x2="362.5" y2="238.9" stroke="#f4853f" stroke-width="1"/>
<rect x="361.0" y="234.0" width="3" height="2.1" fill="#f4853f"/>
<line x1="366.4" y1="231.2" x2="366.4" y2="238.2" stroke="#f4853f" stroke-width="1"/>
<rect x="364.9" y="234.7" width="3" height="2.1" fill="#f4853f"/>
<line x1="370.4" y1="231.9" x2="370.4" y2="240.3" stroke="#f4853f" stroke-width="1"/>
<rect x="369.3" y="235.1" width="2.2" height="2.0" fill="#6a4a38" stroke="#f4853f" stroke-width="0.9"/>
<line x1="374.6" y1="229.2" x2="374.6" y2="237.5" stroke="#f4853f" stroke-width="1"/>
<rect x="373.1" y="234.0" width="3" height="2.1" fill="#f4853f"/>
<line x1="378.5" y1="234.7" x2="378.5" y2="243.8" stroke="#f4853f" stroke-width="1"/>
<rect x="377.4" y="235.8" width="2.2" height="5.5" fill="#6a4a38" stroke="#f4853f" stroke-width="0.9"/>
<line x1="382.5" y1="231.2" x2="382.5" y2="240.6" stroke="#f4853f" stroke-width="1"/>
<rect x="381.0" y="237.5" width="3" height="2.1" fill="#f4853f"/>
<line x1="386.5" y1="231.9" x2="386.5" y2="241.0" stroke="#f4853f" stroke-width="1"/>
<rect x="385.4" y="236.5" width="2.2" height="2.0" fill="#6a4a38" stroke="#f4853f" stroke-width="0.9"/>
<line x1="390.6" y1="232.6" x2="390.6" y2="244.4" stroke="#f4853f" stroke-width="1"/>
<rect x="389.5" y="237.2" width="2.2" height="4.1" fill="#6a4a38" stroke="#f4853f" stroke-width="0.9"/>
<line x1="395.6" y1="232.6" x2="395.6" y2="241.0" stroke="#f4853f" stroke-width="1"/>
<rect x="394.5" y="237.9" width="2.2" height="2.0" fill="#6a4a38" stroke="#f4853f" stroke-width="0.9"/>
<line x1="399.6" y1="233.3" x2="399.6" y2="238.2" stroke="#f4853f" stroke-width="1"/>
<rect x="398.1" y="234.7" width="3" height="2.1" fill="#f4853f"/>
<line x1="403.5" y1="228.5" x2="403.5" y2="237.1" stroke="#f4853f" stroke-width="1"/>
<rect x="402.0" y="234.0" width="3" height="2.1" fill="#f4853f"/>
<line x1="407.5" y1="229.9" x2="407.5" y2="237.8" stroke="#f4853f" stroke-width="1"/>
<rect x="406.4" y="234.4" width="2.2" height="2.0" fill="#6a4a38" stroke="#f4853f" stroke-width="0.9"/>
<line x1="411.4" y1="231.2" x2="411.4" y2="241.0" stroke="#f4853f" stroke-width="1"/>
<rect x="410.3" y="236.5" width="2.2" height="3.4" fill="#6a4a38" stroke="#f4853f" stroke-width="0.9"/>
<line x1="415.4" y1="237.2" x2="415.4" y2="248.2" stroke="#f4853f" stroke-width="1"/>
<rect x="414.3" y="238.6" width="2.2" height="8.2" fill="#6a4a38" stroke="#f4853f" stroke-width="0.9"/>
<line x1="419.4" y1="243.8" x2="419.4" y2="254.2" stroke="#f4853f" stroke-width="1"/>
<rect x="418.3" y="246.2" width="2.2" height="6.1" fill="#6a4a38" stroke="#f4853f" stroke-width="0.9"/>
<line x1="423.3" y1="249.3" x2="423.3" y2="262.8" stroke="#f4853f" stroke-width="1"/>
<rect x="422.2" y="251.1" width="2.2" height="8.2" fill="#6a4a38" stroke="#f4853f" stroke-width="0.9"/>
<line x1="427.5" y1="246.5" x2="427.5" y2="260.8" stroke="#f4853f" stroke-width="1"/>
<rect x="426.4" y="248.3" width="2.2" height="11.0" fill="#f4853f" stroke="#f4853f" stroke-width="0.9"/>
<line x1="432.4" y1="229.9" x2="432.4" y2="251.7" stroke="#f4853f" stroke-width="1"/>
<rect x="431.3" y="236.5" width="2.2" height="10.3" fill="#f4853f" stroke="#f4853f" stroke-width="0.9"/>
<line x1="436.4" y1="204.2" x2="436.4" y2="234.0" stroke="#f4853f" stroke-width="1"/>
<rect x="435.3" y="212.2" width="2.2" height="20.7" fill="#f4853f" stroke="#f4853f" stroke-width="0.9"/>
<line x1="440.4" y1="206.2" x2="440.4" y2="214.9" stroke="#f4853f" stroke-width="1"/>
<rect x="439.3" y="208.0" width="2.2" height="2.7" fill="#6a4a38" stroke="#f4853f" stroke-width="0.9"/>
<line x1="444.4" y1="191.7" x2="444.4" y2="213.5" stroke="#f4853f" stroke-width="1"/>
<rect x="443.3" y="202.5" width="2.2" height="5.5" fill="#6a4a38" stroke="#f4853f" stroke-width="0.9"/>
<line x1="448.6" y1="197.9" x2="448.6" y2="213.5" stroke="#f4853f" stroke-width="1"/>
<rect x="447.5" y="201.1" width="2.2" height="11.0" fill="#6a4a38" stroke="#f4853f" stroke-width="0.9"/>
<line x1="452.5" y1="206.2" x2="452.5" y2="220.1" stroke="#f4853f" stroke-width="1"/>
<rect x="451.4" y="212.9" width="2.2" height="6.1" fill="#6a4a38" stroke="#f4853f" stroke-width="0.9"/>
<line x1="456.4" y1="195.8" x2="456.4" y2="219.4" stroke="#f4853f" stroke-width="1"/>
<rect x="455.3" y="199.7" width="2.2" height="18.6" fill="#f4853f" stroke="#f4853f" stroke-width="0.9"/>
<line x1="460.4" y1="191.0" x2="460.4" y2="204.9" stroke="#f4853f" stroke-width="1"/>
<rect x="459.3" y="199.0" width="2.2" height="4.1" fill="#6a4a38" stroke="#f4853f" stroke-width="0.9"/>
<line x1="464.6" y1="202.1" x2="464.6" y2="209.3" stroke="#f4853f" stroke-width="1"/>
<rect x="463.5" y="203.2" width="2.2" height="4.8" fill="#6a4a38" stroke="#f4853f" stroke-width="0.9"/>
<line x1="468.5" y1="201.4" x2="468.5" y2="207.2" stroke="#f4853f" stroke-width="1"/>
<rect x="467.4" y="203.2" width="2.2" height="2.7" fill="#6a4a38" stroke="#f4853f" stroke-width="0.9"/>
<line x1="473.6" y1="200.0" x2="473.6" y2="205.8" stroke="#f4853f" stroke-width="1"/>
<rect x="472.5" y="201.8" width="2.2" height="2.7" fill="#6a4a38" stroke="#f4853f" stroke-width="0.9"/>
<line x1="477.5" y1="201.4" x2="477.5" y2="211.8" stroke="#f4853f" stroke-width="1"/>
<rect x="476.4" y="206.0" width="2.2" height="2.0" fill="#6a4a38" stroke="#f4853f" stroke-width="0.9"/>
<line x1="481.5" y1="200.7" x2="481.5" y2="209.7" stroke="#f4853f" stroke-width="1"/>
<rect x="480.4" y="202.5" width="2.2" height="4.8" fill="#6a4a38" stroke="#f4853f" stroke-width="0.9"/>
<line x1="481.4" y1="200.0" x2="481.4" y2="208.3" stroke="#f4853f" stroke-width="1"/>
<rect x="480.3" y="201.8" width="2.2" height="5.5" fill="#6a4a38" stroke="#f4853f" stroke-width="0.9"/>
<line x1="485.6" y1="200.0" x2="485.6" y2="215.3" stroke="#f4853f" stroke-width="1"/>
<rect x="484.5" y="201.1" width="2.2" height="12.4" fill="#6a4a38" stroke="#f4853f" stroke-width="0.9"/>
<line x1="489.4" y1="211.1" x2="489.4" y2="217.4" stroke="#f4853f" stroke-width="1"/>
<rect x="487.9" y="213.9" width="3" height="1.4" fill="#f4853f"/>
<line x1="493.5" y1="214.3" x2="493.5" y2="220.4" stroke="#f4853f" stroke-width="1"/>
<rect x="492.4" y="215.7" width="2.2" height="3.4" fill="#6a4a38" stroke="#f4853f" stroke-width="0.9"/>
<line x1="497.4" y1="217.1" x2="497.4" y2="221.1" stroke="#f4853f" stroke-width="1"/>
<rect x="495.9" y="218.1" width="3" height="2.1" fill="#f4853f"/>
<line x1="501.5" y1="211.8" x2="501.5" y2="220.1" stroke="#f4853f" stroke-width="1"/>
<rect x="500.0" y="217.4" width="3" height="2.1" fill="#f4853f"/>
<line x1="505.4" y1="210.4" x2="505.4" y2="223.6" stroke="#f4853f" stroke-width="1"/>
<rect x="504.3" y="217.1" width="2.2" height="5.5" fill="#6a4a38" stroke="#f4853f" stroke-width="0.9"/>
<line x1="509.4" y1="218.1" x2="509.4" y2="227.8" stroke="#f4853f" stroke-width="1"/>
<rect x="507.9" y="220.1" width="3" height="1.8" fill="#f4853f"/>
<line x1="514.4" y1="216.7" x2="514.4" y2="222.5" stroke="#f4853f" stroke-width="1"/>
<rect x="512.9" y="218.8" width="3" height="2.1" fill="#f4853f"/>
<line x1="518.5" y1="219.2" x2="518.5" y2="223.2" stroke="#f4853f" stroke-width="1"/>
<rect x="517.0" y="220.1" width="3" height="2.1" fill="#f4853f"/>
<line x1="522.4" y1="219.9" x2="522.4" y2="223.2" stroke="#f4853f" stroke-width="1"/>
<rect x="520.9" y="220.8" width="3" height="1.4" fill="#f4853f"/>
<line x1="526.5" y1="215.3" x2="526.5" y2="225.0" stroke="#f4853f" stroke-width="1"/>
<rect x="525.4" y="217.1" width="2.2" height="4.8" fill="#f4853f" stroke="#f4853f" stroke-width="0.9"/>
<line x1="530.4" y1="216.0" x2="530.4" y2="224.3" stroke="#f4853f" stroke-width="1"/>
<rect x="529.3" y="217.1" width="2.2" height="2.0" fill="#6a4a38" stroke="#f4853f" stroke-width="0.9"/>
<line x1="534.4" y1="218.1" x2="534.4" y2="227.8" stroke="#f4853f" stroke-width="1"/>
<rect x="533.3" y="220.5" width="2.2" height="2.7" fill="#6a4a38" stroke="#f4853f" stroke-width="0.9"/>
<line x1="538.3" y1="218.1" x2="538.3" y2="225.0" stroke="#f4853f" stroke-width="1"/>
<rect x="536.8" y="220.8" width="3" height="2.1" fill="#f4853f"/>
<line x1="542.5" y1="217.4" x2="542.5" y2="222.2" stroke="#f4853f" stroke-width="1"/>
<rect x="541.0" y="219.2" width="3" height="1.9" fill="#f4853f"/>
<line x1="546.7" y1="218.1" x2="546.7" y2="222.2" stroke="#f4853f" stroke-width="1"/>
<rect x="545.2" y="220.1" width="3" height="1.4" fill="#f4853f"/>
<line x1="550.6" y1="216.0" x2="550.6" y2="223.2" stroke="#f4853f" stroke-width="1"/>
<rect x="549.1" y="218.8" width="3" height="1.4" fill="#f4853f"/>
<line x1="555.4" y1="209.7" x2="555.4" y2="218.3" stroke="#f4853f" stroke-width="1"/>
<rect x="553.9" y="213.2" width="3" height="1.4" fill="#f4853f"/>
<line x1="559.4" y1="204.2" x2="559.4" y2="218.1" stroke="#f4853f" stroke-width="1"/>
<rect x="558.3" y="206.7" width="2.2" height="10.3" fill="#f4853f" stroke="#f4853f" stroke-width="0.9"/>
<line x1="563.5" y1="204.6" x2="563.5" y2="210.7" stroke="#f4853f" stroke-width="1"/>
<rect x="562.4" y="206.0" width="2.2" height="3.4" fill="#6a4a38" stroke="#f4853f" stroke-width="0.9"/>
<line x1="567.5" y1="208.8" x2="567.5" y2="215.6" stroke="#f4853f" stroke-width="1"/>
<rect x="566.4" y="210.1" width="2.2" height="4.1" fill="#6a4a38" stroke="#f4853f" stroke-width="0.9"/>
<line x1="571.4" y1="211.8" x2="571.4" y2="215.3" stroke="#f4853f" stroke-width="1"/>
<rect x="569.9" y="212.8" width="3" height="1.7" fill="#f4853f"/>
<line x1="575.4" y1="204.2" x2="575.4" y2="213.9" stroke="#f4853f" stroke-width="1"/>
<rect x="574.3" y="209.4" width="2.2" height="3.4" fill="#f4853f" stroke="#f4853f" stroke-width="0.9"/>
<line x1="579.4" y1="199.3" x2="579.4" y2="208.6" stroke="#f4853f" stroke-width="1"/>
<rect x="577.9" y="204.9" width="3" height="1.4" fill="#f4853f"/>
<line x1="583.5" y1="204.9" x2="583.5" y2="213.9" stroke="#f4853f" stroke-width="1"/>
<rect x="582.4" y="206.7" width="2.2" height="4.1" fill="#6a4a38" stroke="#f4853f" stroke-width="0.9"/>
<line x1="587.6" y1="206.2" x2="587.6" y2="212.1" stroke="#f4853f" stroke-width="1"/>
<rect x="586.5" y="208.7" width="2.2" height="2.0" fill="#f4853f" stroke="#f4853f" stroke-width="0.9"/>
<line x1="591.5" y1="200.0" x2="591.5" y2="210.0" stroke="#f4853f" stroke-width="1"/>
<rect x="590.4" y="202.5" width="2.2" height="4.1" fill="#f4853f" stroke="#f4853f" stroke-width="0.9"/>
<line x1="596.4" y1="200.3" x2="596.4" y2="206.9" stroke="#f4853f" stroke-width="1"/>
<rect x="595.3" y="201.8" width="2.2" height="2.7" fill="#6a4a38" stroke="#f4853f" stroke-width="0.9"/>
<line x1="600.6" y1="198.6" x2="600.6" y2="204.4" stroke="#f4853f" stroke-width="1"/>
<rect x="599.1" y="201.1" width="3" height="1.7" fill="#f4853f"/>
<line x1="604.6" y1="201.4" x2="604.6" y2="208.3" stroke="#f4853f" stroke-width="1"/>
<rect x="603.5" y="203.2" width="2.2" height="4.1" fill="#6a4a38" stroke="#f4853f" stroke-width="0.9"/>
<line x1="608.5" y1="188.2" x2="608.5" y2="207.2" stroke="#f4853f" stroke-width="1"/>
<rect x="607.4" y="190.7" width="2.2" height="15.9" fill="#f4853f" stroke="#f4853f" stroke-width="0.9"/>
<line x1="612.6" y1="184.0" x2="612.6" y2="192.6" stroke="#f4853f" stroke-width="1"/>
<rect x="611.5" y="189.3" width="2.2" height="2.0" fill="#6a4a38" stroke="#f4853f" stroke-width="0.9"/>
<line x1="616.5" y1="184.7" x2="616.5" y2="192.6" stroke="#f4853f" stroke-width="1"/>
<rect x="615.0" y="188.2" width="3" height="2.1" fill="#f4853f"/>
<line x1="620.6" y1="179.9" x2="620.6" y2="191.0" stroke="#f4853f" stroke-width="1"/>
<rect x="619.5" y="183.0" width="2.2" height="6.8" fill="#f4853f" stroke="#f4853f" stroke-width="0.9"/>
<line x1="624.4" y1="179.9" x2="624.4" y2="185.7" stroke="#f4853f" stroke-width="1"/>
<rect x="622.9" y="181.2" width="3" height="2.1" fill="#f4853f"/>
<line x1="628.6" y1="174.3" x2="628.6" y2="182.9" stroke="#f4853f" stroke-width="1"/>
<rect x="627.1" y="181.2" width="3" height="1.4" fill="#f4853f"/>
<line x1="632.5" y1="175.0" x2="632.5" y2="184.7" stroke="#f4853f" stroke-width="1"/>
<rect x="631.0" y="177.8" width="3" height="1.4" fill="#f4853f"/>
<line x1="637.4" y1="177.1" x2="637.4" y2="181.5" stroke="#f4853f" stroke-width="1"/>
<rect x="635.9" y="178.5" width="3" height="2.1" fill="#f4853f"/>
<line x1="637.4" y1="177.1" x2="637.4" y2="182.2" stroke="#f4853f" stroke-width="1"/>
<rect x="636.3" y="178.9" width="2.2" height="2.0" fill="#6a4a38" stroke="#f4853f" stroke-width="0.9"/>
<line x1="641.4" y1="176.8" x2="641.4" y2="187.1" stroke="#f4853f" stroke-width="1"/>
<rect x="640.3" y="178.2" width="2.2" height="7.5" fill="#6a4a38" stroke="#f4853f" stroke-width="0.9"/>
<line x1="645.4" y1="181.2" x2="645.4" y2="187.8" stroke="#f4853f" stroke-width="1"/>
<rect x="644.3" y="182.3" width="2.2" height="3.4" fill="#f4853f" stroke="#f4853f" stroke-width="0.9"/>
<line x1="649.3" y1="180.6" x2="649.3" y2="188.9" stroke="#f4853f" stroke-width="1"/>
<rect x="648.2" y="181.7" width="2.2" height="2.0" fill="#6a4a38" stroke="#f4853f" stroke-width="0.9"/>
<line x1="653.3" y1="173.6" x2="653.3" y2="184.0" stroke="#f4853f" stroke-width="1"/>
<rect x="652.2" y="179.6" width="2.2" height="3.4" fill="#f4853f" stroke="#f4853f" stroke-width="0.9"/>
<line x1="657.2" y1="175.0" x2="657.2" y2="182.6" stroke="#f4853f" stroke-width="1"/>
<rect x="656.1" y="177.5" width="2.2" height="3.4" fill="#f4853f" stroke="#f4853f" stroke-width="0.9"/>
<line x1="661.4" y1="173.6" x2="661.4" y2="180.1" stroke="#f4853f" stroke-width="1"/>
<rect x="659.9" y="177.8" width="3" height="1.7" fill="#f4853f"/>
<line x1="665.3" y1="172.2" x2="665.3" y2="180.8" stroke="#f4853f" stroke-width="1"/>
<rect x="663.8" y="176.4" width="3" height="1.4" fill="#f4853f"/>
<line x1="669.4" y1="173.9" x2="669.4" y2="180.1" stroke="#f4853f" stroke-width="1"/>
<rect x="668.3" y="175.4" width="2.2" height="4.1" fill="#6a4a38" stroke="#f4853f" stroke-width="0.9"/>
<line x1="674.6" y1="176.7" x2="674.6" y2="186.1" stroke="#f4853f" stroke-width="1"/>
<rect x="673.5" y="178.2" width="2.2" height="6.8" fill="#6a4a38" stroke="#f4853f" stroke-width="0.9"/>
<line x1="678.5" y1="181.9" x2="678.5" y2="190.3" stroke="#f4853f" stroke-width="1"/>
<rect x="677.4" y="183.7" width="2.2" height="5.5" fill="#6a4a38" stroke="#f4853f" stroke-width="0.9"/>
<line x1="682.5" y1="185.4" x2="682.5" y2="192.6" stroke="#f4853f" stroke-width="1"/>
<rect x="681.4" y="188.6" width="2.2" height="2.7" fill="#6a4a38" stroke="#f4853f" stroke-width="0.9"/>
<line x1="686.5" y1="186.4" x2="686.5" y2="191.9" stroke="#f4853f" stroke-width="1"/>
<rect x="685.0" y="188.9" width="3" height="2.1" fill="#f4853f"/>
<line x1="690.6" y1="184.7" x2="690.6" y2="191.9" stroke="#f4853f" stroke-width="1"/>
<rect x="689.1" y="188.9" width="3" height="2.1" fill="#f4853f"/>
<line x1="694.4" y1="186.4" x2="694.4" y2="191.9" stroke="#f4853f" stroke-width="1"/>
<rect x="692.9" y="188.6" width="3" height="1.7" fill="#f4853f"/>
<line x1="698.5" y1="185.8" x2="698.5" y2="193.3" stroke="#f4853f" stroke-width="1"/>
<rect x="697.4" y="187.9" width="2.2" height="3.4" fill="#6a4a38" stroke="#f4853f" stroke-width="0.9"/>
<line x1="702.6" y1="190.0" x2="702.6" y2="200.0" stroke="#f4853f" stroke-width="1"/>
<rect x="701.5" y="191.4" width="2.2" height="6.1" fill="#6a4a38" stroke="#f4853f" stroke-width="0.9"/>
<line x1="706.5" y1="196.9" x2="706.5" y2="207.9" stroke="#f4853f" stroke-width="1"/>
<rect x="705.4" y="198.3" width="2.2" height="8.2" fill="#6a4a38" stroke="#f4853f" stroke-width="0.9"/>
<line x1="710.7" y1="204.6" x2="710.7" y2="206.9" stroke="#f4853f" stroke-width="1"/>
<rect x="709.2" y="205.6" width="3" height="1.1" fill="#f4853f"/>
<line x1="715.6" y1="203.5" x2="715.6" y2="216.2" stroke="#f4853f" stroke-width="1"/>
<rect x="714.5" y="207.3" width="2.2" height="7.5" fill="#6a4a38" stroke="#f4853f" stroke-width="0.9"/>
<line x1="719.4" y1="211.1" x2="719.4" y2="220.1" stroke="#f4853f" stroke-width="1"/>
<rect x="718.3" y="213.6" width="2.2" height="5.5" fill="#6a4a38" stroke="#f4853f" stroke-width="0.9"/>
<line x1="723.5" y1="215.6" x2="723.5" y2="225.0" stroke="#f4853f" stroke-width="1"/>
<rect x="722.4" y="217.1" width="2.2" height="3.4" fill="#6a4a38" stroke="#f4853f" stroke-width="0.9"/>
<line x1="727.5" y1="217.4" x2="727.5" y2="225.7" stroke="#f4853f" stroke-width="1"/>
<rect x="726.4" y="219.2" width="2.2" height="5.5" fill="#6a4a38" stroke="#f4853f" stroke-width="0.9"/>
<line x1="731.5" y1="219.4" x2="731.5" y2="229.2" stroke="#f4853f" stroke-width="1"/>
<rect x="730.4" y="222.6" width="2.2" height="5.5" fill="#6a4a38" stroke="#f4853f" stroke-width="0.9"/>
<line x1="735.4" y1="222.2" x2="735.4" y2="227.2" stroke="#f4853f" stroke-width="1"/>
<rect x="733.9" y="225.0" width="3" height="1.7" fill="#f4853f"/>
<line x1="739.4" y1="222.2" x2="739.4" y2="234.0" stroke="#f4853f" stroke-width="1"/>
<rect x="738.3" y="225.4" width="2.2" height="7.5" fill="#6a4a38" stroke="#f4853f" stroke-width="0.9"/>
<line x1="743.3" y1="218.1" x2="743.3" y2="234.0" stroke="#f4853f" stroke-width="1"/>
<rect x="742.2" y="221.2" width="2.2" height="11.7" fill="#f4853f" stroke="#f4853f" stroke-width="0.9"/>
<line x1="747.5" y1="218.1" x2="747.5" y2="226.4" stroke="#f4853f" stroke-width="1"/>
<rect x="746.4" y="219.8" width="2.2" height="5.5" fill="#6a4a38" stroke="#f4853f" stroke-width="0.9"/>
<line x1="751.4" y1="222.2" x2="751.4" y2="232.2" stroke="#f4853f" stroke-width="1"/>
<rect x="749.9" y="224.3" width="3" height="1.4" fill="#f4853f"/>
<line x1="756.5" y1="213.2" x2="756.5" y2="227.1" stroke="#f4853f" stroke-width="1"/>
<rect x="755.4" y="216.4" width="2.2" height="6.8" fill="#f4853f" stroke="#f4853f" stroke-width="0.9"/>
<line x1="760.4" y1="201.4" x2="760.4" y2="218.1" stroke="#f4853f" stroke-width="1"/>
<rect x="759.3" y="205.3" width="2.2" height="9.6" fill="#f4853f" stroke="#f4853f" stroke-width="0.9"/>
<line x1="764.6" y1="201.1" x2="764.6" y2="205.8" stroke="#f4853f" stroke-width="1"/>
<rect x="763.1" y="202.5" width="3" height="1.7" fill="#f4853f"/>
<line x1="768.6" y1="199.3" x2="768.6" y2="205.8" stroke="#f4853f" stroke-width="1"/>
<rect x="767.1" y="202.8" width="3" height="2.1" fill="#f4853f"/>
<line x1="772.5" y1="201.1" x2="772.5" y2="205.8" stroke="#f4853f" stroke-width="1"/>
<rect x="771.0" y="203.5" width="3" height="1.8" fill="#f4853f"/>
<line x1="776.7" y1="204.6" x2="776.7" y2="214.2" stroke="#f4853f" stroke-width="1"/>
<rect x="775.6" y="207.3" width="2.2" height="2.0" fill="#6a4a38" stroke="#f4853f" stroke-width="0.9"/>
<line x1="780.4" y1="204.6" x2="780.4" y2="213.5" stroke="#f4853f" stroke-width="1"/>
<rect x="778.9" y="208.3" width="3" height="2.1" fill="#f4853f"/>
<line x1="784.4" y1="208.1" x2="784.4" y2="214.9" stroke="#f4853f" stroke-width="1"/>
<rect x="782.9" y="210.4" width="3" height="2.1" fill="#f4853f"/>
<line x1="788.5" y1="211.1" x2="788.5" y2="218.1" stroke="#f4853f" stroke-width="1"/>
<rect x="787.4" y="212.2" width="2.2" height="4.8" fill="#6a4a38" stroke="#f4853f" stroke-width="0.9"/>
<line x1="792.4" y1="213.9" x2="792.4" y2="219.4" stroke="#f4853f" stroke-width="1"/>
<rect x="791.3" y="215.7" width="2.2" height="2.7" fill="#6a4a38" stroke="#f4853f" stroke-width="0.9"/>
<line x1="797.2" y1="216.7" x2="797.2" y2="224.3" stroke="#f4853f" stroke-width="1"/>
<rect x="796.1" y="218.5" width="2.2" height="3.4" fill="#6a4a38" stroke="#f4853f" stroke-width="0.9"/>
<line x1="801.2" y1="215.3" x2="801.2" y2="222.2" stroke="#f4853f" stroke-width="1"/>
<rect x="800.1" y="217.1" width="2.2" height="4.1" fill="#f4853f" stroke="#f4853f" stroke-width="0.9"/>
<line x1="805.3" y1="202.8" x2="805.3" y2="216.9" stroke="#f4853f" stroke-width="1"/>
<rect x="803.8" y="209.7" width="3" height="2.1" fill="#f4853f"/>
<line x1="809.3" y1="208.1" x2="809.3" y2="213.2" stroke="#f4853f" stroke-width="1"/>
<rect x="808.2" y="209.4" width="2.2" height="2.7" fill="#6a4a38" stroke="#f4853f" stroke-width="0.9"/>
<line x1="813.2" y1="208.3" x2="813.2" y2="212.8" stroke="#f4853f" stroke-width="1"/>
<rect x="812.1" y="209.4" width="2.2" height="2.7" fill="#6a4a38" stroke="#f4853f" stroke-width="0.9"/>
<line x1="817.2" y1="209.4" x2="817.2" y2="215.6" stroke="#f4853f" stroke-width="1"/>
<rect x="815.7" y="210.4" width="3" height="2.1" fill="#f4853f"/>
<line x1="821.1" y1="208.3" x2="821.1" y2="212.8" stroke="#f4853f" stroke-width="1"/>
<rect x="819.6" y="209.4" width="3" height="1.9" fill="#f4853f"/>
<line x1="825.3" y1="209.4" x2="825.3" y2="215.6" stroke="#f4853f" stroke-width="1"/>
<rect x="823.8" y="211.1" width="3" height="2.1" fill="#f4853f"/>
<line x1="829.2" y1="208.6" x2="829.2" y2="214.2" stroke="#f4853f" stroke-width="1"/>
<rect x="827.7" y="209.7" width="3" height="2.1" fill="#f4853f"/>
<line x1="833.6" y1="205.3" x2="833.6" y2="209.3" stroke="#f4853f" stroke-width="1"/>
<rect x="832.1" y="206.2" width="3" height="2.1" fill="#f4853f"/>
<line x1="838.5" y1="203.5" x2="838.5" y2="210.0" stroke="#f4853f" stroke-width="1"/>
<rect x="837.0" y="206.2" width="3" height="1.8" fill="#f4853f"/>
<line x1="842.6" y1="204.6" x2="842.6" y2="209.3" stroke="#f4853f" stroke-width="1"/>
<rect x="841.5" y="206.0" width="2.2" height="1.7" fill="#6a4a38" stroke="#f4853f" stroke-width="0.9"/>
<path d="M19.2 162.2 L50.4 162.5 L63.6 165.0 L73.3 166.4 L87.2 166.7 L98.3 167.1 L115.0 167.5 L133.0 168.9 L153.9 169.2 L160.8 171.2 L170.0 169.9 L183.9 169.9 L197.8 171.2 L214.4 170.3 L228.3 169.2 L242.2 170.3 L267.2 171.2 L289.4 171.9 L300.6 173.3 L311.7 176.4 L320.0 177.5 L329.7 181.7 L338.9 185.4 L352.8 189.6 L370.8 197.2 L386.1 202.1 L400.0 205.6 L413.9 210.0 L427.8 215.3 L444.4 215.0 L458.3 214.6 L463.9 212.5 L484.7 212.8 L493.9 213.6 L514.7 215.0 L535.6 215.3 L550.0 216.5 L577.0 216.0 L591.0 214.6 L605.0 212.8 L619.0 210.7 L630.0 208.5 L637.0 206.9 L646.1 203.5 L657.2 202.5 L668.3 199.3 L687.8 197.9 L701.7 197.2 L718.3 197.9 L729.4 202.1 L740.6 203.5 L748.9 205.6 L760.0 206.9 L773.9 206.7 L787.8 207.2 L801.7 208.3 L822.5 208.6 L842.6 208.3" fill="none" stroke="#c8222a" stroke-width="1.4" stroke-linejoin="round"/>
<path d="M19.2 160.8 L33.0 161.1 L40.0 162.3 L50.4 164.7 L63.6 168.5 L78.9 172.6 L87.2 173.0 L98.3 170.8 L115.0 170.5 L126.0 168.9 L133.0 170.5 L148.3 172.6 L160.8 173.0 L170.0 173.3 L175.5 171.2 L197.8 170.8 L228.3 170.8 L242.2 173.0 L258.9 173.3 L272.8 173.0 L289.4 172.6 L297.8 174.7 L306.1 179.6 L311.7 183.8 L317.2 185.1 L322.8 188.6 L329.7 194.9 L335.4 198.6 L345.8 204.9 L356.9 209.7 L370.8 217.4 L383.3 222.9 L394.4 227.1 L405.6 227.5 L413.9 230.6 L422.2 234.7 L427.8 237.2 L433.3 236.1 L438.9 232.6 L450.0 226.4 L463.9 220.1 L475.0 216.7 L484.7 216.2 L507.8 216.7 L535.6 218.1 L555.0 218.3 L563.3 217.4 L577.2 216.0 L591.1 213.2 L605.0 210.4 L616.1 206.2 L625.8 201.4 L632.8 198.3 L639.7 195.4 L648.9 193.1 L664.2 188.2 L673.9 186.8 L682.2 187.8 L700.3 187.8 L710.0 191.7 L721.1 197.2 L732.2 203.5 L740.6 208.3 L753.1 212.5 L760.0 211.1 L773.9 210.8 L787.8 211.0 L798.9 213.2 L815.6 213.2 L835.0 212.8 L842.6 209.7" fill="none" stroke="#0a0ac8" stroke-width="1.4" stroke-linejoin="round"/>
</g>
<g clip-path="url(#cmacd)">
<rect x="20.2" y="295" width="2.4" height="1" fill="#b8303a"/>
<rect x="24.4" y="295" width="2.4" height="1" fill="#b8303a"/>
<rect x="28.5" y="295" width="2.4" height="1" fill="#b8303a"/>
<rect x="32.6" y="295" width="2.4" height="1" fill="#b8303a"/>
<rect x="36.7" y="295" width="2.4" height="1" fill="#b8303a"/>
<rect x="40.8" y="295" width="2.4" height="1" fill="#b8303a"/>
<rect x="44.9" y="295" width="2.4" height="1" fill="#b8303a"/>
<rect x="49.0" y="295" width="2.4" height="1" fill="#b8303a"/>
<rect x="53.1" y="295" width="2.4" height="1" fill="#b8303a"/>
<rect x="57.2" y="295" width="2.4" height="1" fill="#b8303a"/>
<rect x="61.5" y="295.4" width="1.7" height="0.9" fill="#c42a34"/>
<rect x="65.6" y="295.4" width="1.7" height="1.3" fill="#c42a34"/>
<rect x="69.7" y="295.4" width="1.7" height="1.4" fill="#c42a34"/>
<rect x="73.8" y="295.4" width="1.7" height="1.5" fill="#c42a34"/>
<rect x="77.9" y="295.4" width="1.7" height="1.6" fill="#c42a34"/>
<rect x="82.0" y="295.4" width="1.7" height="1.4" fill="#c42a34"/>
<rect x="86.1" y="295.4" width="1.7" height="1.1" fill="#c42a34"/>
<rect x="90.2" y="295.4" width="1.7" height="0.9" fill="#c42a34"/>
<rect x="94.3" y="295.4" width="1.7" height="0.6" fill="#c42a34"/>
<rect x="98.2" y="295" width="2.4" height="1" fill="#b8303a"/>
<rect x="102.5" y="294.8" width="1.7" height="0.6" fill="#c42a34"/>
<rect x="106.6" y="294.4" width="1.7" height="1.0" fill="#c42a34"/>
<rect x="110.7" y="294.1" width="1.7" height="1.3" fill="#c42a34"/>
<rect x="114.8" y="294.4" width="1.7" height="1.0" fill="#c42a34"/>
<rect x="118.7" y="295" width="2.4" height="1" fill="#b8303a"/>
<rect x="122.8" y="295" width="2.4" height="1" fill="#b8303a"/>
<rect x="126.9" y="295" width="2.4" height="1" fill="#b8303a"/>
<rect x="131.0" y="295" width="2.4" height="1" fill="#b8303a"/>
<rect x="135.1" y="295" width="2.4" height="1" fill="#b8303a"/>
<rect x="139.4" y="295.4" width="1.7" height="0.5" fill="#c42a34"/>
<rect x="143.6" y="295.4" width="1.7" height="0.7" fill="#c42a34"/>
<rect x="147.7" y="295.4" width="1.7" height="0.9" fill="#c42a34"/>
<rect x="151.8" y="295.4" width="1.7" height="0.9" fill="#c42a34"/>
<rect x="155.9" y="295.4" width="1.7" height="0.7" fill="#c42a34"/>
<rect x="160.0" y="295.4" width="1.7" height="0.6" fill="#c42a34"/>
<rect x="163.9" y="295" width="2.4" height="1" fill="#b8303a"/>
<rect x="168.0" y="295" width="2.4" height="1" fill="#b8303a"/>
<rect x="172.1" y="295" width="2.4" height="1" fill="#b8303a"/>
<rect x="176.2" y="295" width="2.4" height="1" fill="#b8303a"/>
<rect x="180.3" y="295" width="2.4" height="1" fill="#b8303a"/>
<rect x="184.4" y="295" width="2.4" height="1" fill="#b8303a"/>
<rect x="188.5" y="295" width="2.4" height="1" fill="#b8303a"/>
<rect x="192.6" y="295" width="2.4" height="1" fill="#b8303a"/>
<rect x="196.7" y="295" width="2.4" height="1" fill="#b8303a"/>
<rect x="200.8" y="295" width="2.4" height="1" fill="#b8303a"/>
<rect x="204.9" y="295" width="2.4" height="1" fill="#b8303a"/>
<rect x="209.0" y="295" width="2.4" height="1" fill="#b8303a"/>
<rect x="213.1" y="295" width="2.4" height="1" fill="#b8303a"/>
<rect x="217.2" y="295" width="2.4" height="1" fill="#b8303a"/>
<rect x="221.3" y="295" width="2.4" height="1" fill="#b8303a"/>
<rect x="225.4" y="295" width="2.4" height="1" fill="#b8303a"/>
<rect x="229.5" y="295" width="2.4" height="1" fill="#b8303a"/>
<rect x="233.6" y="295" width="2.4" height="1" fill="#b8303a"/>
<rect x="237.7" y="295" width="2.4" height="1" fill="#b8303a"/>
<rect x="242.0" y="295.4" width="1.7" height="0.9" fill="#c42a34"/>
<rect x="246.1" y="295.4" width="1.7" height="1.1" fill="#c42a34"/>
<rect x="250.2" y="295.4" width="1.7" height="0.8" fill="#c42a34"/>
<rect x="254.3" y="295.4" width="1.7" height="0.6" fill="#c42a34"/>
<rect x="258.2" y="295" width="2.4" height="1" fill="#b8303a"/>
<rect x="262.3" y="295" width="2.4" height="1" fill="#b8303a"/>
<rect x="266.5" y="295" width="2.4" height="1" fill="#b8303a"/>
<rect x="270.6" y="295" width="2.4" height="1" fill="#b8303a"/>
<rect x="274.7" y="295" width="2.4" height="1" fill="#b8303a"/>
<rect x="278.8" y="295" width="2.4" height="1" fill="#b8303a"/>
<rect x="282.9" y="295" width="2.4" height="1" fill="#b8303a"/>
<rect x="287.0" y="295" width="2.4" height="1" fill="#b8303a"/>
<rect x="291.1" y="295" width="2.4" height="1" fill="#b8303a"/>
<rect x="295.2" y="295" width="2.4" height="1" fill="#b8303a"/>
<rect x="299.5" y="295.4" width="1.7" height="1.2" fill="#c42a34"/>
<rect x="303.6" y="295.4" width="1.7" height="2.2" fill="#c42a34"/>
<rect x="307.7" y="295.4" width="1.7" height="3.7" fill="#c42a34"/>
<rect x="311.8" y="295.4" width="1.7" height="5.4" fill="#c42a34"/>
<rect x="315.9" y="295.4" width="1.7" height="6.5" fill="#c42a34"/>
<rect x="320.0" y="295.4" width="1.7" height="6.3" fill="#c42a34"/>
<rect x="324.1" y="295.4" width="1.7" height="6.0" fill="#c42a34"/>
<rect x="328.2" y="295.4" width="1.7" height="5.9" fill="#c42a34"/>
<rect x="332.3" y="295.4" width="1.7" height="5.9" fill="#c42a34"/>
<rect x="336.4" y="295.4" width="1.7" height="5.8" fill="#c42a34"/>
<rect x="340.5" y="295.4" width="1.7" height="5.0" fill="#c42a34"/>
<rect x="344.6" y="295.4" width="1.7" height="4.1" fill="#c42a34"/>
<rect x="348.7" y="295.4" width="1.7" height="3.5" fill="#c42a34"/>
<rect x="352.8" y="295.4" width="1.7" height="2.3" fill="#c42a34"/>
<rect x="356.9" y="295.4" width="1.7" height="2.0" fill="#c42a34"/>
<rect x="361.0" y="295.4" width="1.7" height="1.9" fill="#c42a34"/>
<rect x="365.1" y="295.4" width="1.7" height="1.8" fill="#c42a34"/>
<rect x="369.2" y="295.4" width="1.7" height="0.8" fill="#c42a34"/>
<rect x="373.1" y="295" width="2.4" height="1" fill="#b8303a"/>
<rect x="377.2" y="295" width="2.4" height="1" fill="#b8303a"/>
<rect x="381.3" y="295" width="2.4" height="1" fill="#b8303a"/>
<rect x="385.4" y="295" width="2.4" height="1" fill="#b8303a"/>
<rect x="389.6" y="295" width="2.4" height="1" fill="#b8303a"/>
<rect x="393.7" y="295" width="2.4" height="1" fill="#b8303a"/>
<rect x="398.0" y="294.8" width="1.7" height="0.6" fill="#c42a34"/>
<rect x="402.1" y="294.6" width="1.7" height="0.8" fill="#c42a34"/>
<rect x="406.2" y="294.4" width="1.7" height="1.0" fill="#c42a34"/>
<rect x="410.3" y="294.3" width="1.7" height="1.1" fill="#c42a34"/>
<rect x="414.4" y="294.6" width="1.7" height="0.8" fill="#c42a34"/>
<rect x="418.5" y="294.9" width="1.7" height="0.5" fill="#c42a34"/>
<rect x="422.6" y="294.9" width="1.7" height="0.5" fill="#c42a34"/>
<rect x="426.7" y="294.8" width="1.7" height="0.6" fill="#c42a34"/>
<rect x="430.8" y="294.6" width="1.7" height="0.8" fill="#c42a34"/>
<rect x="434.9" y="291.3" width="1.7" height="4.1" fill="#c42a34"/>
<rect x="439.0" y="287.2" width="1.7" height="8.2" fill="#c42a34"/>
<rect x="443.1" y="285.1" width="1.7" height="10.3" fill="#c42a34"/>
<rect x="447.2" y="285.0" width="1.7" height="10.4" fill="#c42a34"/>
<rect x="451.3" y="286.0" width="1.7" height="9.4" fill="#c42a34"/>
<rect x="455.4" y="286.0" width="1.7" height="9.4" fill="#c42a34"/>
<rect x="459.5" y="288.5" width="1.7" height="6.9" fill="#c42a34"/>
<rect x="463.6" y="289.9" width="1.7" height="5.5" fill="#c42a34"/>
<rect x="467.7" y="290.9" width="1.7" height="4.5" fill="#c42a34"/>
<rect x="471.8" y="291.9" width="1.7" height="3.5" fill="#c42a34"/>
<rect x="475.9" y="292.9" width="1.7" height="2.5" fill="#c42a34"/>
<rect x="480.0" y="293.6" width="1.7" height="1.8" fill="#c42a34"/>
<rect x="484.1" y="294.5" width="1.7" height="0.9" fill="#c42a34"/>
<rect x="488.0" y="295" width="2.4" height="1" fill="#b8303a"/>
<rect x="492.3" y="295.4" width="1.7" height="0.9" fill="#c42a34"/>
<rect x="496.4" y="295.4" width="1.7" height="1.2" fill="#c42a34"/>
<rect x="500.5" y="295.4" width="1.7" height="1.3" fill="#c42a34"/>
<rect x="504.6" y="295.4" width="1.7" height="1.3" fill="#c42a34"/>
<rect x="508.7" y="295.4" width="1.7" height="1.3" fill="#c42a34"/>
<rect x="512.9" y="295.4" width="1.7" height="1.4" fill="#c42a34"/>
<rect x="517.0" y="295.4" width="1.7" height="1.4" fill="#c42a34"/>
<rect x="521.1" y="295.4" width="1.7" height="1.5" fill="#c42a34"/>
<rect x="525.2" y="295.4" width="1.7" height="1.5" fill="#c42a34"/>
<rect x="529.3" y="295.4" width="1.7" height="1.6" fill="#c42a34"/>
<rect x="533.4" y="295.4" width="1.7" height="1.6" fill="#c42a34"/>
<rect x="537.5" y="295.4" width="1.7" height="0.7" fill="#c42a34"/>
<rect x="541.4" y="295" width="2.4" height="1" fill="#b8303a"/>
<rect x="545.5" y="295" width="2.4" height="1" fill="#b8303a"/>
<rect x="549.6" y="295" width="2.4" height="1" fill="#b8303a"/>
<rect x="553.7" y="295" width="2.4" height="1" fill="#b8303a"/>
<rect x="557.8" y="295" width="2.4" height="1" fill="#b8303a"/>
<rect x="561.9" y="295" width="2.4" height="1" fill="#b8303a"/>
<rect x="566.0" y="295" width="2.4" height="1" fill="#b8303a"/>
<rect x="570.1" y="295" width="2.4" height="1" fill="#b8303a"/>
<rect x="574.4" y="294.8" width="1.7" height="0.6" fill="#c42a34"/>
<rect x="578.5" y="294.8" width="1.7" height="0.6" fill="#c42a34"/>
<rect x="582.6" y="294.7" width="1.7" height="0.7" fill="#c42a34"/>
<rect x="586.7" y="294.7" width="1.7" height="0.7" fill="#c42a34"/>
<rect x="590.8" y="294.7" width="1.7" height="0.7" fill="#c42a34"/>
<rect x="594.9" y="294.6" width="1.7" height="0.8" fill="#c42a34"/>
<rect x="599.0" y="294.6" width="1.7" height="0.8" fill="#c42a34"/>
<rect x="603.1" y="294.2" width="1.7" height="1.2" fill="#c42a34"/>
<rect x="607.2" y="293.9" width="1.7" height="1.5" fill="#c42a34"/>
<rect x="611.3" y="293.5" width="1.7" height="1.9" fill="#c42a34"/>
<rect x="615.4" y="293.1" width="1.7" height="2.3" fill="#c42a34"/>
<rect x="619.5" y="292.8" width="1.7" height="2.6" fill="#c42a34"/>
<rect x="623.6" y="292.8" width="1.7" height="2.6" fill="#c42a34"/>
<rect x="627.7" y="292.8" width="1.7" height="2.6" fill="#c42a34"/>
<rect x="631.8" y="292.8" width="1.7" height="2.6" fill="#c42a34"/>
<rect x="636.0" y="292.8" width="1.7" height="2.6" fill="#c42a34"/>
<rect x="640.1" y="293.0" width="1.7" height="2.4" fill="#c42a34"/>
<rect x="644.2" y="293.9" width="1.7" height="1.5" fill="#c42a34"/>
<rect x="648.3" y="294.8" width="1.7" height="0.6" fill="#c42a34"/>
<rect x="652.2" y="295" width="2.4" height="1" fill="#b8303a"/>
<rect x="656.3" y="295" width="2.4" height="1" fill="#b8303a"/>
<rect x="660.4" y="295" width="2.4" height="1" fill="#b8303a"/>
<rect x="664.5" y="295" width="2.4" height="1" fill="#b8303a"/>
<rect x="668.8" y="295.4" width="1.7" height="0.6" fill="#c42a34"/>
<rect x="672.9" y="295.4" width="1.7" height="1.5" fill="#c42a34"/>
<rect x="677.0" y="295.4" width="1.7" height="2.2" fill="#c42a34"/>
<rect x="681.1" y="295.4" width="1.7" height="2.9" fill="#c42a34"/>
<rect x="685.2" y="295.4" width="1.7" height="3.3" fill="#c42a34"/>
<rect x="689.3" y="295.4" width="1.7" height="3.6" fill="#c42a34"/>
<rect x="693.4" y="295.4" width="1.7" height="3.8" fill="#c42a34"/>
<rect x="697.5" y="295.4" width="1.7" height="4.1" fill="#c42a34"/>
<rect x="701.6" y="295.4" width="1.7" height="4.5" fill="#c42a34"/>
<rect x="705.7" y="295.4" width="1.7" height="5.2" fill="#c42a34"/>
<rect x="709.8" y="295.4" width="1.7" height="6.5" fill="#c42a34"/>
<rect x="713.9" y="295.4" width="1.7" height="7.5" fill="#c42a34"/>
<rect x="718.0" y="295.4" width="1.7" height="8.4" fill="#c42a34"/>
<rect x="722.1" y="295.4" width="1.7" height="8.4" fill="#c42a34"/>
<rect x="726.2" y="295.4" width="1.7" height="8.1" fill="#c42a34"/>
<rect x="730.3" y="295.4" width="1.7" height="7.7" fill="#c42a34"/>
<rect x="734.4" y="295.4" width="1.7" height="7.4" fill="#c42a34"/>
<rect x="738.5" y="295.4" width="1.7" height="7.1" fill="#c42a34"/>
<rect x="742.6" y="295.4" width="1.7" height="5.3" fill="#c42a34"/>
<rect x="746.7" y="295.4" width="1.7" height="3.7" fill="#c42a34"/>
<rect x="750.8" y="295.4" width="1.7" height="3.1" fill="#c42a34"/>
<rect x="754.7" y="295" width="2.4" height="1" fill="#b8303a"/>
<rect x="759.1" y="294.6" width="1.7" height="0.8" fill="#c42a34"/>
<rect x="763.2" y="293.2" width="1.7" height="2.2" fill="#c42a34"/>
<rect x="767.3" y="292.8" width="1.7" height="2.6" fill="#c42a34"/>
<rect x="771.4" y="292.8" width="1.7" height="2.6" fill="#c42a34"/>
<rect x="775.5" y="292.8" width="1.7" height="2.6" fill="#c42a34"/>
<rect x="779.6" y="292.8" width="1.7" height="2.6" fill="#c42a34"/>
<rect x="783.7" y="292.8" width="1.7" height="2.6" fill="#c42a34"/>
<rect x="787.8" y="294.4" width="1.7" height="1.0" fill="#c42a34"/>
<rect x="791.7" y="295" width="2.4" height="1" fill="#b8303a"/>
<rect x="795.8" y="295" width="2.4" height="1" fill="#b8303a"/>
<rect x="799.9" y="295" width="2.4" height="1" fill="#b8303a"/>
<rect x="804.0" y="295" width="2.4" height="1" fill="#b8303a"/>
<rect x="808.1" y="295" width="2.4" height="1" fill="#b8303a"/>
<rect x="812.2" y="295" width="2.4" height="1" fill="#b8303a"/>
<rect x="816.3" y="295" width="2.4" height="1" fill="#b8303a"/>
<rect x="820.4" y="295" width="2.4" height="1" fill="#b8303a"/>
<rect x="824.5" y="295" width="2.4" height="1" fill="#b8303a"/>
<rect x="828.6" y="295" width="2.4" height="1" fill="#b8303a"/>
<rect x="832.7" y="295" width="2.4" height="1" fill="#b8303a"/>
<rect x="836.8" y="295" width="2.4" height="1" fill="#b8303a"/>
<rect x="840.9" y="295" width="2.4" height="1" fill="#b8303a"/>
<path d="M21.0 295.6 L35.0 298.4 L51.0 300.0 L63.0 304.0 L79.0 304.4 L95.0 299.6 L113.0 296.0 L135.0 297.6 L153.0 300.4 L167.0 298.0 L185.0 296.0 L205.0 295.0 L235.0 293.0 L245.0 296.5 L258.0 297.0 L270.0 296.3 L286.9 297.1 L292.6 297.4 L303.9 303.0 L315.1 309.8 L320.8 310.9 L328.7 315.5 L337.7 318.8 L345.6 320.8 L354.7 317.7 L363.7 320.5 L371.6 318.8 L382.9 318.3 L395.0 316.9 L411.0 312.9 L423.0 314.9 L433.0 311.9 L444.0 296.0 L453.0 292.0 L463.0 287.0 L473.0 285.6 L483.0 285.6 L495.0 289.0 L507.0 293.0 L519.0 295.6 L535.0 296.4 L555.0 297.0 L567.0 294.0 L591.0 290.4 L603.0 289.0 L615.0 285.6 L620.0 282.0 L628.0 280.0 L640.0 279.2 L656.0 280.4 L670.0 281.6 L680.0 285.6 L696.0 289.6 L708.0 295.0 L720.0 303.0 L730.0 307.5 L740.0 311.5 L752.0 311.0 L760.0 308.0 L768.0 302.0 L776.0 300.4 L790.0 300.4 L800.0 301.5 L812.0 300.0 L824.0 298.0 L843.6 296.4" fill="none" stroke="#0c0c78" stroke-width="1.2" stroke-linejoin="round"/>
<path d="M21.0 294.4 L35.0 296.0 L51.0 297.6 L63.0 300.0 L75.0 301.5 L83.0 302.3 L95.0 301.0 L107.0 299.0 L119.0 297.0 L135.0 296.4 L151.0 297.6 L167.0 297.0 L185.0 295.6 L205.0 294.4 L225.0 293.6 L235.0 293.0 L245.0 294.3 L258.0 296.0 L270.0 296.3 L281.3 295.1 L292.6 295.5 L303.9 298.2 L315.1 301.6 L326.4 306.4 L337.7 310.9 L349.0 315.1 L360.3 316.6 L371.6 317.7 L382.9 317.7 L394.2 317.3 L405.0 314.9 L415.0 313.5 L433.0 312.9 L441.0 308.9 L453.0 300.9 L463.0 295.0 L475.0 291.6 L483.0 288.4 L490.0 287.0 L503.0 289.0 L515.0 291.0 L531.0 293.0 L543.0 294.4 L555.0 295.0 L567.0 294.0 L579.0 292.4 L591.0 291.0 L603.0 290.4 L615.0 288.0 L625.0 285.6 L630.0 283.6 L640.0 281.6 L650.0 280.4 L670.0 280.4 L680.0 281.6 L694.0 285.0 L708.0 289.0 L720.0 294.0 L730.0 299.0 L740.0 303.5 L750.0 307.5 L758.0 308.0 L768.0 305.0 L780.0 303.0 L790.0 301.5 L800.0 301.5 L812.0 300.4 L824.0 298.4 L836.0 297.0 L843.6 296.4" fill="none" stroke="#c8202a" stroke-width="1" stroke-linejoin="round"/>
<circle cx="21.2" cy="294.4" r="1.4" fill="#e4222c"/>
<circle cx="25.4" cy="294.9" r="1.4" fill="#e4222c"/>
<circle cx="29.5" cy="295.4" r="1.4" fill="#e4222c"/>
<circle cx="33.6" cy="295.8" r="1.4" fill="#e4222c"/>
<circle cx="37.7" cy="296.3" r="1.4" fill="#e4222c"/>
<circle cx="41.8" cy="296.7" r="1.4" fill="#e4222c"/>
<circle cx="45.9" cy="297.1" r="1.4" fill="#e4222c"/>
<circle cx="50.0" cy="297.5" r="1.4" fill="#e4222c"/>
<circle cx="54.1" cy="298.2" r="1.4" fill="#e4222c"/>
<circle cx="58.2" cy="299.0" r="1.4" fill="#e4222c"/>
<circle cx="62.3" cy="299.9" r="1.4" fill="#e4222c"/>
<circle cx="66.4" cy="300.4" r="1.4" fill="#e4222c"/>
<circle cx="70.5" cy="300.9" r="1.4" fill="#e4222c"/>
<circle cx="74.6" cy="301.4" r="1.4" fill="#e4222c"/>
<circle cx="78.7" cy="301.9" r="1.4" fill="#e4222c"/>
<circle cx="82.8" cy="302.3" r="1.4" fill="#e4222c"/>
<circle cx="86.9" cy="301.9" r="1.4" fill="#e4222c"/>
<circle cx="91.0" cy="301.4" r="1.4" fill="#e4222c"/>
<circle cx="95.1" cy="301.0" r="1.4" fill="#e4222c"/>
<circle cx="99.2" cy="300.3" r="1.4" fill="#e4222c"/>
<circle cx="103.3" cy="299.6" r="1.4" fill="#e4222c"/>
<circle cx="107.4" cy="298.9" r="1.4" fill="#e4222c"/>
<circle cx="111.5" cy="298.2" r="1.4" fill="#e4222c"/>
<circle cx="115.6" cy="297.6" r="1.4" fill="#e4222c"/>
<circle cx="119.7" cy="297.0" r="1.4" fill="#e4222c"/>
<circle cx="123.8" cy="296.8" r="1.4" fill="#e4222c"/>
<circle cx="127.9" cy="296.7" r="1.4" fill="#e4222c"/>
<circle cx="132.0" cy="296.5" r="1.4" fill="#e4222c"/>
<circle cx="136.1" cy="296.5" r="1.4" fill="#e4222c"/>
<circle cx="140.2" cy="296.8" r="1.4" fill="#e4222c"/>
<circle cx="144.4" cy="297.1" r="1.4" fill="#e4222c"/>
<circle cx="148.5" cy="297.4" r="1.4" fill="#e4222c"/>
<circle cx="152.6" cy="297.5" r="1.4" fill="#e4222c"/>
<circle cx="156.7" cy="297.4" r="1.4" fill="#e4222c"/>
<circle cx="160.8" cy="297.2" r="1.4" fill="#e4222c"/>
<circle cx="164.9" cy="297.1" r="1.4" fill="#e4222c"/>
<circle cx="169.0" cy="296.8" r="1.4" fill="#e4222c"/>
<circle cx="173.1" cy="296.5" r="1.4" fill="#e4222c"/>
<circle cx="177.2" cy="296.2" r="1.4" fill="#e4222c"/>
<circle cx="181.3" cy="295.9" r="1.4" fill="#e4222c"/>
<circle cx="185.4" cy="295.6" r="1.4" fill="#e4222c"/>
<circle cx="189.5" cy="295.3" r="1.4" fill="#e4222c"/>
<circle cx="193.6" cy="295.1" r="1.4" fill="#e4222c"/>
<circle cx="197.7" cy="294.8" r="1.4" fill="#e4222c"/>
<circle cx="201.8" cy="294.6" r="1.4" fill="#e4222c"/>
<circle cx="205.9" cy="294.4" r="1.4" fill="#e4222c"/>
<circle cx="210.0" cy="294.2" r="1.4" fill="#e4222c"/>
<circle cx="214.1" cy="294.0" r="1.4" fill="#e4222c"/>
<circle cx="218.2" cy="293.9" r="1.4" fill="#e4222c"/>
<circle cx="222.3" cy="293.7" r="1.4" fill="#e4222c"/>
<circle cx="226.4" cy="293.5" r="1.4" fill="#e4222c"/>
<circle cx="230.5" cy="293.3" r="1.4" fill="#e4222c"/>
<circle cx="234.6" cy="293.0" r="1.4" fill="#e4222c"/>
<circle cx="238.7" cy="293.5" r="1.4" fill="#e4222c"/>
<circle cx="242.8" cy="294.0" r="1.4" fill="#e4222c"/>
<circle cx="246.9" cy="294.6" r="1.4" fill="#e4222c"/>
<circle cx="251.0" cy="295.1" r="1.4" fill="#e4222c"/>
<circle cx="255.1" cy="295.6" r="1.4" fill="#e4222c"/>
<circle cx="259.2" cy="296.0" r="1.4" fill="#e4222c"/>
<circle cx="263.3" cy="296.1" r="1.4" fill="#e4222c"/>
<circle cx="267.5" cy="296.2" r="1.4" fill="#e4222c"/>
<circle cx="271.6" cy="296.1" r="1.4" fill="#e4222c"/>
<circle cx="275.7" cy="295.7" r="1.4" fill="#e4222c"/>
<circle cx="279.8" cy="295.3" r="1.4" fill="#e4222c"/>
<circle cx="283.9" cy="295.2" r="1.4" fill="#e4222c"/>
<circle cx="288.0" cy="295.3" r="1.4" fill="#e4222c"/>
<circle cx="292.1" cy="295.5" r="1.4" fill="#e4222c"/>
<circle cx="296.2" cy="296.4" r="1.4" fill="#e4222c"/>
<circle cx="300.3" cy="297.3" r="1.4" fill="#e4222c"/>
<circle cx="304.4" cy="298.3" r="1.4" fill="#e4222c"/>
<circle cx="308.5" cy="299.6" r="1.4" fill="#e4222c"/>
<circle cx="312.6" cy="300.8" r="1.4" fill="#e4222c"/>
<circle cx="316.7" cy="302.3" r="1.4" fill="#e4222c"/>
<circle cx="320.8" cy="304.0" r="1.4" fill="#e4222c"/>
<circle cx="324.9" cy="305.8" r="1.4" fill="#e4222c"/>
<circle cx="329.0" cy="307.4" r="1.4" fill="#e4222c"/>
<circle cx="333.1" cy="309.1" r="1.4" fill="#e4222c"/>
<circle cx="337.2" cy="310.7" r="1.4" fill="#e4222c"/>
<circle cx="341.3" cy="312.2" r="1.4" fill="#e4222c"/>
<circle cx="345.4" cy="313.8" r="1.4" fill="#e4222c"/>
<circle cx="349.5" cy="315.2" r="1.4" fill="#e4222c"/>
<circle cx="353.6" cy="315.7" r="1.4" fill="#e4222c"/>
<circle cx="357.7" cy="316.3" r="1.4" fill="#e4222c"/>
<circle cx="361.8" cy="316.7" r="1.4" fill="#e4222c"/>
<circle cx="365.9" cy="317.1" r="1.4" fill="#e4222c"/>
<circle cx="370.0" cy="317.5" r="1.4" fill="#e4222c"/>
<circle cx="374.1" cy="317.7" r="1.4" fill="#e4222c"/>
<circle cx="378.2" cy="317.7" r="1.4" fill="#e4222c"/>
<circle cx="382.3" cy="317.7" r="1.4" fill="#e4222c"/>
<circle cx="386.4" cy="317.6" r="1.4" fill="#e4222c"/>
<circle cx="390.6" cy="317.4" r="1.4" fill="#e4222c"/>
<circle cx="394.7" cy="317.2" r="1.4" fill="#e4222c"/>
<circle cx="398.8" cy="316.3" r="1.4" fill="#e4222c"/>
<circle cx="402.9" cy="315.4" r="1.4" fill="#e4222c"/>
<circle cx="407.0" cy="314.6" r="1.4" fill="#e4222c"/>
<circle cx="411.1" cy="314.1" r="1.4" fill="#e4222c"/>
<circle cx="415.2" cy="313.5" r="1.4" fill="#e4222c"/>
<circle cx="419.3" cy="313.4" r="1.4" fill="#e4222c"/>
<circle cx="423.4" cy="313.2" r="1.4" fill="#e4222c"/>
<circle cx="427.5" cy="313.1" r="1.4" fill="#e4222c"/>
<circle cx="431.6" cy="312.9" r="1.4" fill="#e4222c"/>
<circle cx="435.7" cy="311.6" r="1.4" fill="#e4222c"/>
<circle cx="439.8" cy="309.5" r="1.4" fill="#e4222c"/>
<circle cx="443.9" cy="307.0" r="1.4" fill="#e4222c"/>
<circle cx="448.0" cy="304.2" r="1.4" fill="#e4222c"/>
<circle cx="452.1" cy="301.5" r="1.4" fill="#e4222c"/>
<circle cx="456.2" cy="299.0" r="1.4" fill="#e4222c"/>
<circle cx="460.3" cy="296.6" r="1.4" fill="#e4222c"/>
<circle cx="464.4" cy="294.6" r="1.4" fill="#e4222c"/>
<circle cx="468.5" cy="293.4" r="1.4" fill="#e4222c"/>
<circle cx="472.6" cy="292.3" r="1.4" fill="#e4222c"/>
<circle cx="476.7" cy="290.9" r="1.4" fill="#e4222c"/>
<circle cx="480.8" cy="289.3" r="1.4" fill="#e4222c"/>
<circle cx="484.9" cy="288.0" r="1.4" fill="#e4222c"/>
<circle cx="489.0" cy="287.2" r="1.4" fill="#e4222c"/>
<circle cx="493.1" cy="287.5" r="1.4" fill="#e4222c"/>
<circle cx="497.2" cy="288.1" r="1.4" fill="#e4222c"/>
<circle cx="501.3" cy="288.7" r="1.4" fill="#e4222c"/>
<circle cx="505.4" cy="289.4" r="1.4" fill="#e4222c"/>
<circle cx="509.5" cy="290.1" r="1.4" fill="#e4222c"/>
<circle cx="513.7" cy="290.8" r="1.4" fill="#e4222c"/>
<circle cx="517.8" cy="291.3" r="1.4" fill="#e4222c"/>
<circle cx="521.9" cy="291.9" r="1.4" fill="#e4222c"/>
<circle cx="526.0" cy="292.4" r="1.4" fill="#e4222c"/>
<circle cx="530.1" cy="292.9" r="1.4" fill="#e4222c"/>
<circle cx="534.2" cy="293.4" r="1.4" fill="#e4222c"/>
<circle cx="538.3" cy="293.8" r="1.4" fill="#e4222c"/>
<circle cx="542.4" cy="294.3" r="1.4" fill="#e4222c"/>
<circle cx="546.5" cy="294.6" r="1.4" fill="#e4222c"/>
<circle cx="550.6" cy="294.8" r="1.4" fill="#e4222c"/>
<circle cx="554.7" cy="295.0" r="1.4" fill="#e4222c"/>
<circle cx="558.8" cy="294.7" r="1.4" fill="#e4222c"/>
<circle cx="562.9" cy="294.3" r="1.4" fill="#e4222c"/>
<circle cx="567.0" cy="294.0" r="1.4" fill="#e4222c"/>
<circle cx="571.1" cy="293.5" r="1.4" fill="#e4222c"/>
<circle cx="575.2" cy="292.9" r="1.4" fill="#e4222c"/>
<circle cx="579.3" cy="292.4" r="1.4" fill="#e4222c"/>
<circle cx="583.4" cy="291.9" r="1.4" fill="#e4222c"/>
<circle cx="587.5" cy="291.4" r="1.4" fill="#e4222c"/>
<circle cx="591.6" cy="291.0" r="1.4" fill="#e4222c"/>
<circle cx="595.7" cy="290.8" r="1.4" fill="#e4222c"/>
<circle cx="599.8" cy="290.6" r="1.4" fill="#e4222c"/>
<circle cx="603.9" cy="290.2" r="1.4" fill="#e4222c"/>
<circle cx="608.0" cy="289.4" r="1.4" fill="#e4222c"/>
<circle cx="612.1" cy="288.6" r="1.4" fill="#e4222c"/>
<circle cx="616.2" cy="287.7" r="1.4" fill="#e4222c"/>
<circle cx="620.3" cy="286.7" r="1.4" fill="#e4222c"/>
<circle cx="624.4" cy="285.7" r="1.4" fill="#e4222c"/>
<circle cx="628.5" cy="284.2" r="1.4" fill="#e4222c"/>
<circle cx="632.6" cy="283.1" r="1.4" fill="#e4222c"/>
<circle cx="636.8" cy="282.2" r="1.4" fill="#e4222c"/>
<circle cx="640.9" cy="281.5" r="1.4" fill="#e4222c"/>
<circle cx="645.0" cy="281.0" r="1.4" fill="#e4222c"/>
<circle cx="649.1" cy="280.5" r="1.4" fill="#e4222c"/>
<circle cx="653.2" cy="280.4" r="1.4" fill="#e4222c"/>
<circle cx="657.3" cy="280.4" r="1.4" fill="#e4222c"/>
<circle cx="661.4" cy="280.4" r="1.4" fill="#e4222c"/>
<circle cx="665.5" cy="280.4" r="1.4" fill="#e4222c"/>
<circle cx="669.6" cy="280.4" r="1.4" fill="#e4222c"/>
<circle cx="673.7" cy="280.8" r="1.4" fill="#e4222c"/>
<circle cx="677.8" cy="281.3" r="1.4" fill="#e4222c"/>
<circle cx="681.9" cy="282.1" r="1.4" fill="#e4222c"/>
<circle cx="686.0" cy="283.1" r="1.4" fill="#e4222c"/>
<circle cx="690.1" cy="284.1" r="1.4" fill="#e4222c"/>
<circle cx="694.2" cy="285.1" r="1.4" fill="#e4222c"/>
<circle cx="698.3" cy="286.2" r="1.4" fill="#e4222c"/>
<circle cx="702.4" cy="287.4" r="1.4" fill="#e4222c"/>
<circle cx="706.5" cy="288.6" r="1.4" fill="#e4222c"/>
<circle cx="710.6" cy="290.1" r="1.4" fill="#e4222c"/>
<circle cx="714.7" cy="291.8" r="1.4" fill="#e4222c"/>
<circle cx="718.8" cy="293.5" r="1.4" fill="#e4222c"/>
<circle cx="722.9" cy="295.5" r="1.4" fill="#e4222c"/>
<circle cx="727.0" cy="297.5" r="1.4" fill="#e4222c"/>
<circle cx="731.1" cy="299.5" r="1.4" fill="#e4222c"/>
<circle cx="735.2" cy="301.4" r="1.4" fill="#e4222c"/>
<circle cx="739.3" cy="303.2" r="1.4" fill="#e4222c"/>
<circle cx="743.4" cy="304.9" r="1.4" fill="#e4222c"/>
<circle cx="747.5" cy="306.5" r="1.4" fill="#e4222c"/>
<circle cx="751.6" cy="307.6" r="1.4" fill="#e4222c"/>
<circle cx="755.7" cy="307.9" r="1.4" fill="#e4222c"/>
<circle cx="759.9" cy="307.4" r="1.4" fill="#e4222c"/>
<circle cx="764.0" cy="306.2" r="1.4" fill="#e4222c"/>
<circle cx="768.1" cy="305.0" r="1.4" fill="#e4222c"/>
<circle cx="772.2" cy="304.3" r="1.4" fill="#e4222c"/>
<circle cx="776.3" cy="303.6" r="1.4" fill="#e4222c"/>
<circle cx="780.4" cy="302.9" r="1.4" fill="#e4222c"/>
<circle cx="784.5" cy="302.3" r="1.4" fill="#e4222c"/>
<circle cx="788.6" cy="301.7" r="1.4" fill="#e4222c"/>
<circle cx="792.7" cy="301.5" r="1.4" fill="#e4222c"/>
<circle cx="796.8" cy="301.5" r="1.4" fill="#e4222c"/>
<circle cx="800.9" cy="301.4" r="1.4" fill="#e4222c"/>
<circle cx="805.0" cy="301.0" r="1.4" fill="#e4222c"/>
<circle cx="809.1" cy="300.7" r="1.4" fill="#e4222c"/>
<circle cx="813.2" cy="300.2" r="1.4" fill="#e4222c"/>
<circle cx="817.3" cy="299.5" r="1.4" fill="#e4222c"/>
<circle cx="821.4" cy="298.8" r="1.4" fill="#e4222c"/>
<circle cx="825.5" cy="298.2" r="1.4" fill="#e4222c"/>
<circle cx="829.6" cy="297.7" r="1.4" fill="#e4222c"/>
<circle cx="833.7" cy="297.3" r="1.4" fill="#e4222c"/>
<circle cx="837.8" cy="296.9" r="1.4" fill="#e4222c"/>
<circle cx="841.9" cy="296.5" r="1.4" fill="#e4222c"/>
</g>
<g clip-path="url(#crsi)">
<rect x="20" y="344" width="822" height="2" fill="#1a1a9e"/>
<rect x="20" y="392" width="822" height="2" fill="#1a1a9e"/>
<path d="M20.0 378.5 L25.0 376.9 L30.0 377.9 L34.0 377.3 L39.0 379.9 L42.5 373.9 L48.0 379.9 L52.0 383.5 L70.0 384.5 L79.0 383.5 L81.5 379.9 L85.0 369.9 L88.0 366.9 L91.0 367.9 L95.3 361.9 L100.0 365.9 L103.0 364.9 L112.2 360.5 L116.8 369.3 L120.8 366.9 L124.4 363.3 L128.4 365.9 L131.8 380.9 L135.8 384.5 L139.8 378.5 L143.8 377.9 L147.8 376.5 L152.8 379.9 L158.7 369.9 L161.7 365.9 L166.7 363.3 L172.7 359.9 L176.7 363.9 L181.1 367.9 L184.7 362.9 L190.7 374.9 L194.7 377.3 L198.7 359.3 L201.7 362.9 L206.7 367.3 L210.6 366.9 L214.6 363.3 L222.6 367.3 L226.6 362.5 L231.6 362.5 L235.6 367.9 L239.6 383.9 L245.0 380.9 L251.0 377.9 L256.0 370.9 L260.0 367.9 L264.0 363.9 L268.0 366.5 L279.0 366.9 L284.3 363.9 L288.9 378.9 L292.3 377.9 L296.9 388.9 L300.9 390.9 L304.3 390.9 L308.9 399.9 L312.9 403.5 L316.9 384.9 L321.4 391.9 L324.8 393.9 L331.8 395.9 L337.4 398.5 L341.8 394.9 L345.4 396.5 L348.8 385.9 L353.8 388.5 L358.8 394.5 L365.8 395.3 L370.8 390.9 L377.8 395.3 L382.1 390.5 L387.7 389.9 L391.7 391.9 L399.7 382.9 L405.7 384.5 L411.7 387.9 L416.7 393.9 L423.3 401.9 L427.7 382.9 L432.7 367.9 L436.6 354.9 L444.0 350.5 L452.4 363.9 L456.4 353.3 L465.0 360.5 L469.0 356.9 L478.0 360.9 L481.5 357.3 L486.0 366.5 L494.0 370.9 L501.0 368.5 L507.0 371.9 L514.0 369.3 L520.0 371.9 L526.2 367.3 L534.8 373.3 L539.8 370.5 L547.8 370.5 L555.4 367.9 L559.4 354.5 L567.8 365.3 L571.8 363.9 L578.8 357.3 L583.7 362.9 L591.7 354.5 L595.7 356.9 L600.7 357.3 L604.7 361.9 L608.7 348.5 L613.7 349.9 L616.7 348.5 L620.7 344.5 L625.7 344.9 L631.7 344.5 L636.6 342.5 L641.6 352.9 L645.6 350.5 L649.6 351.9 L654.0 348.5 L658.6 349.9 L665.0 348.6 L670.0 354.5 L679.0 367.3 L682.4 369.9 L686.4 363.9 L690.3 367.9 L694.9 365.3 L699.9 373.9 L706.3 384.9 L709.9 383.9 L714.9 389.3 L721.9 393.9 L730.9 398.5 L735.5 395.3 L739.5 399.9 L742.9 382.9 L746.8 385.9 L751.4 383.3 L760.8 362.9 L765.8 364.5 L771.8 367.3 L779.8 370.5 L787.8 375.3 L797.4 381.3 L805.3 367.3 L809.3 369.9 L812.7 371.3 L817.7 367.9 L824.7 370.5 L831.7 364.5 L838.7 360.9 L841.7 362.5" fill="none" stroke="#f28e30" stroke-width="1.05" stroke-linejoin="round"/>
<path d="M304.3 390.9 L308.9 399.9" fill="none" stroke="#30e040" stroke-width="1.2" stroke-linecap="round"/>
<path d="M308.9 399.9 L312.9 403.5" fill="none" stroke="#30e040" stroke-width="1.2" stroke-linecap="round"/>
<path d="M321.4 391.9 L324.8 393.9" fill="none" stroke="#30e040" stroke-width="1.2" stroke-linecap="round"/>
<path d="M324.8 393.9 L328.3 394.9" fill="none" stroke="#30e040" stroke-width="1.2" stroke-linecap="round"/>
<path d="M328.3 394.9 L331.8 395.9" fill="none" stroke="#30e040" stroke-width="1.2" stroke-linecap="round"/>
<path d="M331.8 395.9 L337.4 398.5" fill="none" stroke="#30e040" stroke-width="1.2" stroke-linecap="round"/>
<path d="M337.4 398.5 L341.8 394.9" fill="none" stroke="#30e040" stroke-width="1.2" stroke-linecap="round"/>
<path d="M341.8 394.9 L345.4 396.5" fill="none" stroke="#30e040" stroke-width="1.2" stroke-linecap="round"/>
<path d="M353.8 388.5 L358.8 394.5" fill="none" stroke="#30e040" stroke-width="1.2" stroke-linecap="round"/>
<path d="M358.8 394.5 L362.3 394.9" fill="none" stroke="#30e040" stroke-width="1.2" stroke-linecap="round"/>
<path d="M362.3 394.9 L365.8 395.3" fill="none" stroke="#30e040" stroke-width="1.2" stroke-linecap="round"/>
<path d="M370.8 390.9 L374.3 393.1" fill="none" stroke="#30e040" stroke-width="1.2" stroke-linecap="round"/>
<path d="M374.3 393.1 L377.8 395.3" fill="none" stroke="#30e040" stroke-width="1.2" stroke-linecap="round"/>
<path d="M411.7 387.9 L416.7 393.9" fill="none" stroke="#30e040" stroke-width="1.2" stroke-linecap="round"/>
<path d="M416.7 393.9 L420.0 397.9" fill="none" stroke="#30e040" stroke-width="1.2" stroke-linecap="round"/>
<path d="M420.0 397.9 L423.3 401.9" fill="none" stroke="#30e040" stroke-width="1.2" stroke-linecap="round"/>
<path d="M616.7 348.5 L620.7 344.5" fill="none" stroke="#c830f0" stroke-width="1.2" stroke-linecap="round"/>
<path d="M620.7 344.5 L625.7 344.9" fill="none" stroke="#c830f0" stroke-width="1.2" stroke-linecap="round"/>
<path d="M625.7 344.9 L631.7 344.5" fill="none" stroke="#c830f0" stroke-width="1.2" stroke-linecap="round"/>
<path d="M631.7 344.5 L636.6 342.5" fill="none" stroke="#c830f0" stroke-width="1.2" stroke-linecap="round"/>
<path d="M718.4 391.6 L721.9 393.9" fill="none" stroke="#30e040" stroke-width="1.2" stroke-linecap="round"/>
<path d="M721.9 393.9 L726.4 396.2" fill="none" stroke="#30e040" stroke-width="1.2" stroke-linecap="round"/>
<path d="M726.4 396.2 L730.9 398.5" fill="none" stroke="#30e040" stroke-width="1.2" stroke-linecap="round"/>
<path d="M730.9 398.5 L735.5 395.3" fill="none" stroke="#30e040" stroke-width="1.2" stroke-linecap="round"/>
<path d="M735.5 395.3 L739.5 399.9" fill="none" stroke="#30e040" stroke-width="1.2" stroke-linecap="round"/>
</g>
<rect x="19.5" y="40.5" width="884" height="231" fill="none" stroke="#adbfd3" stroke-width="1"/>
<rect x="19.5" y="277.5" width="884" height="45" fill="none" stroke="#adbfd3" stroke-width="1"/>
<rect x="19.5" y="328.5" width="884" height="76" fill="none" stroke="#adbfd3" stroke-width="1"/>
<line x1="25.50" y1="404" x2="25.50" y2="408" stroke="#adbfd3" stroke-width="1"/>
<line x1="50.50" y1="404" x2="50.50" y2="408" stroke="#adbfd3" stroke-width="1"/>
<line x1="75.50" y1="404" x2="75.50" y2="408" stroke="#adbfd3" stroke-width="1"/>
<line x1="99.50" y1="404" x2="99.50" y2="408" stroke="#adbfd3" stroke-width="1"/>
<line x1="124.50" y1="404" x2="124.50" y2="408" stroke="#adbfd3" stroke-width="1"/>
<line x1="148.50" y1="404" x2="148.50" y2="408" stroke="#adbfd3" stroke-width="1"/>
<line x1="173.50" y1="404" x2="173.50" y2="408" stroke="#adbfd3" stroke-width="1"/>
<line x1="198.50" y1="404" x2="198.50" y2="408" stroke="#adbfd3" stroke-width="1"/>
<line x1="222.50" y1="404" x2="222.50" y2="408" stroke="#adbfd3" stroke-width="1"/>
<line x1="247.50" y1="404" x2="247.50" y2="408" stroke="#adbfd3" stroke-width="1"/>
<line x1="272.50" y1="404" x2="272.50" y2="408" stroke="#adbfd3" stroke-width="1"/>
<line x1="296.50" y1="404" x2="296.50" y2="408" stroke="#adbfd3" stroke-width="1"/>
<line x1="321.50" y1="404" x2="321.50" y2="408" stroke="#adbfd3" stroke-width="1"/>
<line x1="345.50" y1="404" x2="345.50" y2="408" stroke="#adbfd3" stroke-width="1"/>
<line x1="370.50" y1="404" x2="370.50" y2="408" stroke="#adbfd3" stroke-width="1"/>
<line x1="395.50" y1="404" x2="395.50" y2="408" stroke="#adbfd3" stroke-width="1"/>
<line x1="419.50" y1="404" x2="419.50" y2="408" stroke="#adbfd3" stroke-width="1"/>
<line x1="444.50" y1="404" x2="444.50" y2="408" stroke="#adbfd3" stroke-width="1"/>
<line x1="468.50" y1="404" x2="468.50" y2="408" stroke="#adbfd3" stroke-width="1"/>
<line x1="493.50" y1="404" x2="493.50" y2="408" stroke="#adbfd3" stroke-width="1"/>
<line x1="518.50" y1="404" x2="518.50" y2="408" stroke="#adbfd3" stroke-width="1"/>
<line x1="542.50" y1="404" x2="542.50" y2="408" stroke="#adbfd3" stroke-width="1"/>
<line x1="567.50" y1="404" x2="567.50" y2="408" stroke="#adbfd3" stroke-width="1"/>
<line x1="592.50" y1="404" x2="592.50" y2="408" stroke="#adbfd3" stroke-width="1"/>
<line x1="616.50" y1="404" x2="616.50" y2="408" stroke="#adbfd3" stroke-width="1"/>
<line x1="641.50" y1="404" x2="641.50" y2="408" stroke="#adbfd3" stroke-width="1"/>
<line x1="665.50" y1="404" x2="665.50" y2="408" stroke="#adbfd3" stroke-width="1"/>
<line x1="690.50" y1="404" x2="690.50" y2="408" stroke="#adbfd3" stroke-width="1"/>
<line x1="715.50" y1="404" x2="715.50" y2="408" stroke="#adbfd3" stroke-width="1"/>
<line x1="739.50" y1="404" x2="739.50" y2="408" stroke="#adbfd3" stroke-width="1"/>
<line x1="764.50" y1="404" x2="764.50" y2="408" stroke="#adbfd3" stroke-width="1"/>
<line x1="789.50" y1="404" x2="789.50" y2="408" stroke="#adbfd3" stroke-width="1"/>
<line x1="813.50" y1="404" x2="813.50" y2="408" stroke="#adbfd3" stroke-width="1"/>
<line x1="838.50" y1="404" x2="838.50" y2="408" stroke="#adbfd3" stroke-width="1"/>
<line x1="862.50" y1="404" x2="862.50" y2="408" stroke="#adbfd3" stroke-width="1"/>
<line x1="887.50" y1="404" x2="887.50" y2="408" stroke="#adbfd3" stroke-width="1"/>
<text x="24.9" y="427.4" font-family="'Liberation Sans', sans-serif" font-size="10.3" fill="#ffffff" text-anchor="middle" stroke="#ffffff" stroke-width="0.18">9</text>
<text x="49.9" y="427.4" font-family="'Liberation Sans', sans-serif" font-size="10.3" fill="#ffffff" text-anchor="middle" stroke="#ffffff" stroke-width="0.18">10</text>
<text x="74.9" y="427.4" font-family="'Liberation Sans', sans-serif" font-size="10.3" fill="#ffffff" text-anchor="middle" stroke="#ffffff" stroke-width="0.18">13</text>
<text x="98.9" y="427.4" font-family="'Liberation Sans', sans-serif" font-size="10.3" fill="#ffffff" text-anchor="middle" stroke="#ffffff" stroke-width="0.18">14</text>
<text x="123.9" y="427.4" font-family="'Liberation Sans', sans-serif" font-size="10.3" fill="#ffffff" text-anchor="middle" stroke="#ffffff" stroke-width="0.18">15</text>
<text x="147.9" y="427.4" font-family="'Liberation Sans', sans-serif" font-size="10.3" fill="#ffffff" text-anchor="middle" stroke="#ffffff" stroke-width="0.18">16</text>
<text x="172.9" y="427.4" font-family="'Liberation Sans', sans-serif" font-size="10.3" fill="#ffffff" text-anchor="middle" stroke="#ffffff" stroke-width="0.18">17</text>
<text x="197.9" y="427.4" font-family="'Liberation Sans', sans-serif" font-size="10.3" fill="#ffffff" text-anchor="middle" stroke="#ffffff" stroke-width="0.18">20</text>
<text x="221.9" y="427.4" font-family="'Liberation Sans', sans-serif" font-size="10.3" fill="#ffffff" text-anchor="middle" stroke="#ffffff" stroke-width="0.18">21</text>
<text x="246.9" y="427.4" font-family="'Liberation Sans', sans-serif" font-size="10.3" fill="#ffffff" text-anchor="middle" stroke="#ffffff" stroke-width="0.18">22</text>
<text x="271.9" y="427.4" font-family="'Liberation Sans', sans-serif" font-size="10.3" fill="#ffffff" text-anchor="middle" stroke="#ffffff" stroke-width="0.18">23</text>
<text x="295.9" y="427.4" font-family="'Liberation Sans', sans-serif" font-size="10.3" fill="#ffffff" text-anchor="middle" stroke="#ffffff" stroke-width="0.18">24</text>
<text x="320.9" y="427.4" font-family="'Liberation Sans', sans-serif" font-size="10.3" fill="#ffffff" text-anchor="middle" stroke="#ffffff" stroke-width="0.18">27</text>
<text x="344.9" y="427.4" font-family="'Liberation Sans', sans-serif" font-size="10.3" fill="#ffffff" text-anchor="middle" stroke="#ffffff" stroke-width="0.18">28</text>
<text x="369.9" y="427.4" font-family="'Liberation Sans', sans-serif" font-size="10.3" fill="#ffffff" text-anchor="middle" stroke="#ffffff" stroke-width="0.18">29</text>
<text x="394.9" y="427.4" font-family="'Liberation Sans', sans-serif" font-size="10.3" fill="#ffffff" text-anchor="middle" stroke="#ffffff" stroke-width="0.18">30</text>
<text x="418.9" y="427.4" font-family="'Liberation Sans', sans-serif" font-size="10.3" fill="#ffffff" text-anchor="middle" stroke="#ffffff" stroke-width="0.18">31</text>
<text x="443.9" y="427.4" font-family="'Liberation Sans', sans-serif" font-size="10.3" fill="#ffffff" text-anchor="middle" stroke="#ffffff" stroke-width="0.18">3</text>
<text x="467.9" y="427.4" font-family="'Liberation Sans', sans-serif" font-size="10.3" fill="#ffffff" text-anchor="middle" stroke="#ffffff" stroke-width="0.18">4</text>
<text x="492.9" y="427.4" font-family="'Liberation Sans', sans-serif" font-size="10.3" fill="#ffffff" text-anchor="middle" stroke="#ffffff" stroke-width="0.18">5</text>
<text x="517.9" y="427.4" font-family="'Liberation Sans', sans-serif" font-size="10.3" fill="#ffffff" text-anchor="middle" stroke="#ffffff" stroke-width="0.18">6</text>
<text x="541.9" y="427.4" font-family="'Liberation Sans', sans-serif" font-size="10.3" fill="#ffffff" text-anchor="middle" stroke="#ffffff" stroke-width="0.18">7</text>
<text x="566.9" y="427.4" font-family="'Liberation Sans', sans-serif" font-size="10.3" fill="#ffffff" text-anchor="middle" stroke="#ffffff" stroke-width="0.18">10</text>
<text x="591.9" y="427.4" font-family="'Liberation Sans', sans-serif" font-size="10.3" fill="#ffffff" text-anchor="middle" stroke="#ffffff" stroke-width="0.18">11</text>
<text x="615.9" y="427.4" font-family="'Liberation Sans', sans-serif" font-size="10.3" fill="#ffffff" text-anchor="middle" stroke="#ffffff" stroke-width="0.18">12</text>
<text x="640.9" y="427.4" font-family="'Liberation Sans', sans-serif" font-size="10.3" fill="#ffffff" text-anchor="middle" stroke="#ffffff" stroke-width="0.18">13</text>
<text x="664.9" y="427.4" font-family="'Liberation Sans', sans-serif" font-size="10.3" fill="#ffffff" text-anchor="middle" stroke="#ffffff" stroke-width="0.18">14</text>
<text x="689.9" y="427.4" font-family="'Liberation Sans', sans-serif" font-size="10.3" fill="#ffffff" text-anchor="middle" stroke="#ffffff" stroke-width="0.18">17</text>
<text x="714.9" y="427.4" font-family="'Liberation Sans', sans-serif" font-size="10.3" fill="#ffffff" text-anchor="middle" stroke="#ffffff" stroke-width="0.18">18</text>
<text x="738.9" y="427.4" font-family="'Liberation Sans', sans-serif" font-size="10.3" fill="#ffffff" text-anchor="middle" stroke="#ffffff" stroke-width="0.18">19</text>
<text x="763.9" y="427.4" font-family="'Liberation Sans', sans-serif" font-size="10.3" fill="#ffffff" text-anchor="middle" stroke="#ffffff" stroke-width="0.18">20</text>
<text x="788.9" y="427.4" font-family="'Liberation Sans', sans-serif" font-size="10.3" fill="#ffffff" text-anchor="middle" stroke="#ffffff" stroke-width="0.18">21</text>
<text x="812.9" y="427.4" font-family="'Liberation Sans', sans-serif" font-size="10.3" fill="#ffffff" text-anchor="middle" stroke="#ffffff" stroke-width="0.18">24</text>
<text x="837.9" y="427.4" font-family="'Liberation Sans', sans-serif" font-size="10.3" fill="#ffffff" text-anchor="middle" stroke="#ffffff" stroke-width="0.18">25</text>
<text x="861.9" y="427.4" font-family="'Liberation Sans', sans-serif" font-size="10.3" fill="#ffffff" text-anchor="middle" stroke="#ffffff" stroke-width="0.18">26</text>
<text x="886.9" y="427.4" font-family="'Liberation Sans', sans-serif" font-size="10.3" fill="#ffffff" text-anchor="middle" stroke="#ffffff" stroke-width="0.18">27</text>
<text x="911" y="57.0" font-family="'Liberation Sans', sans-serif" font-size="10.8" fill="#ffffff" stroke="#ffffff" stroke-width="0.2" textLength="32.3" lengthAdjust="spacingAndGlyphs">111.00</text>
<text x="911" y="88.0" font-family="'Liberation Sans', sans-serif" font-size="10.8" fill="#ffffff" stroke="#ffffff" stroke-width="0.2" textLength="32.3" lengthAdjust="spacingAndGlyphs">110.00</text>
<text x="911" y="120.0" font-family="'Liberation Sans', sans-serif" font-size="10.8" fill="#ffffff" stroke="#ffffff" stroke-width="0.2" textLength="32.3" lengthAdjust="spacingAndGlyphs">109.00</text>
<text x="911" y="151.0" font-family="'Liberation Sans', sans-serif" font-size="10.8" fill="#ffffff" stroke="#ffffff" stroke-width="0.2" textLength="32.3" lengthAdjust="spacingAndGlyphs">108.00</text>
<text x="911" y="182.0" font-family="'Liberation Sans', sans-serif" font-size="10.8" fill="#ffffff" stroke="#ffffff" stroke-width="0.2" textLength="32.3" lengthAdjust="spacingAndGlyphs">107.00</text>
<text x="911" y="244.0" font-family="'Liberation Sans', sans-serif" font-size="10.8" fill="#ffffff" stroke="#ffffff" stroke-width="0.2" textLength="32.3" lengthAdjust="spacingAndGlyphs">105.00</text>
<text x="911.5" y="301.8" font-family="'Liberation Sans', sans-serif" font-size="11" fill="#ffffff" stroke="#ffffff" stroke-width="0.25">+0.0</text>
<text x="911" y="374.8" font-family="'Liberation Sans', sans-serif" font-size="11" fill="#ffffff" stroke="#ffffff" stroke-width="0.25">50</text>
<rect x="903" y="197" width="48" height="21" fill="#ffffff"/>
<text x="911.6" y="211.3" font-family="'Liberation Sans', sans-serif" font-size="11" fill="#3c4058" textLength="32.2" lengthAdjust="spacingAndGlyphs">105.97</text>
<rect x="20" y="278" width="32" height="13" fill="#3a424b"/>
<rect x="20" y="329" width="18" height="13" fill="#3a424b"/>
<text x="22" y="289" font-family="'Liberation Sans', sans-serif" font-size="10.5" fill="#14148a" textLength="28" lengthAdjust="spacingAndGlyphs">MACD</text>
<text x="22" y="340" font-family="'Liberation Sans', sans-serif" font-size="10.5" fill="#f0882a" textLength="14.5" lengthAdjust="spacingAndGlyphs">RSI</text>
<rect x="20" y="41" width="135.6" height="13.2" fill="#3a424b"/>
<rect x="159" y="41" width="135.6" height="13.2" fill="#3a424b"/>
<text x="21" y="52.6" font-family="'Liberation Sans', sans-serif" font-size="10.1" fill="#1414f8" stroke="#1414f8" stroke-width="0.2" textLength="134" lengthAdjust="spacingAndGlyphs">Exponential_Moving_Average</text>
<text x="159.8" y="52.6" font-family="'Liberation Sans', sans-serif" font-size="10.1" fill="#fa141a" stroke="#fa141a" stroke-width="0.2" textLength="134" lengthAdjust="spacingAndGlyphs">Exponential_Moving_Average</text>
<rect x="19" y="40" width="31" height="21.3" fill="#f0f0f0"/><rect x="19" y="40" width="31" height="4.5" fill="#d9d9d9"/>
<rect x="23.3" y="48.2" width="9.4" height="9.4" rx="1.6" fill="url(#rsq)" stroke="#b01820" stroke-width="0.8"/>
<rect x="36.2" y="48.2" width="9.6" height="9.4" rx="1.6" fill="url(#bsq)" stroke="#0a6aa8" stroke-width="0.8"/>
<rect x="20.0" y="382" width="69" height="18.5" rx="2.5" fill="url(#lbl)" stroke="#b4cce0" stroke-width="1"/>
<rect x="19.0" y="381.5" width="1.7" height="27" fill="#cfe4ef"/>
<text x="27.4" y="395.2" font-family="'Liberation Sans', sans-serif" font-size="11" fill="#ffffff" stroke="#ffffff" stroke-width="0.08" textLength="55" lengthAdjust="spacingAndGlyphs">Июль 2020</text>
<rect x="445.0" y="382" width="60" height="18.5" rx="2.5" fill="url(#lbl)" stroke="#b4cce0" stroke-width="1"/>
<rect x="444.0" y="381.5" width="1.7" height="27" fill="#cfe4ef"/>
<text x="453" y="395.2" font-family="'Liberation Sans', sans-serif" font-size="11" fill="#ffffff" stroke="#ffffff" stroke-width="0.08" textLength="44.5" lengthAdjust="spacingAndGlyphs">Авг 2020</text>
</g>
</svg>
</body></html>
